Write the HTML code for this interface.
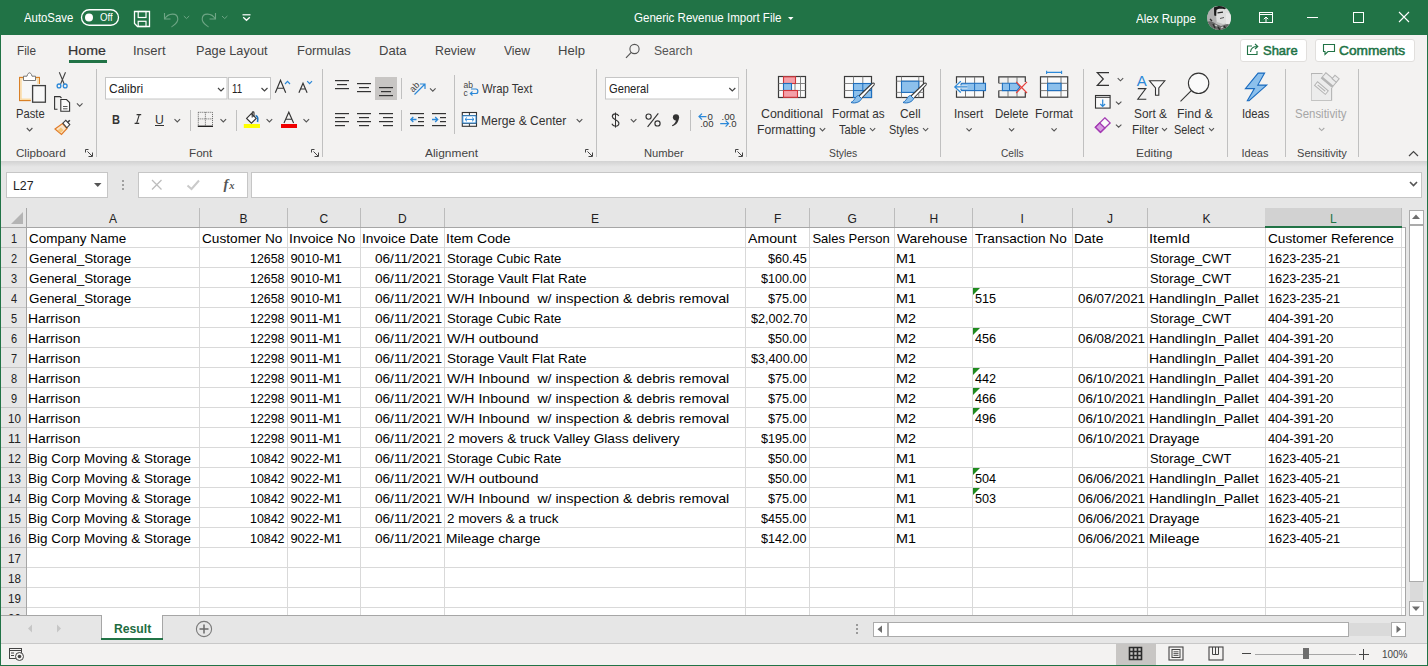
<!DOCTYPE html>
<html><head><meta charset="utf-8"><style>
html,body{margin:0;padding:0;width:1428px;height:666px;overflow:hidden;background:#fff;font-family:"Liberation Sans",sans-serif}
body>div,body>svg{position:absolute}

</style></head><body>
<div style="left:0px;top:0px;width:1428px;height:35px;background:#217346;"></div>
<div style="left:0px;top:35px;width:1428px;height:126px;background:#f3f2f1;"></div>
<div style="left:0px;top:161px;width:1428px;height:455px;background:#e6e6e6;"></div>
<div style="left:0;top:161px;width:1428px;height:6px;background:linear-gradient(#d2d2d2,#e6e6e6)"></div>
<div style="left:0px;top:616px;width:1428px;height:27px;background:#e6e6e6;"></div>
<div style="left:0px;top:643px;width:1428px;height:1px;background:#c8c8c8;"></div>
<div style="left:0px;top:644px;width:1428px;height:21px;background:#f3f2f1;"></div>
<div style="left:27px;top:228px;width:1378px;height:387px;background:#fff;"></div>
<div style="left:27px;top:247px;width:1378px;height:1px;background:#d9d9d9;"></div>
<div style="left:27px;top:267px;width:1378px;height:1px;background:#d9d9d9;"></div>
<div style="left:27px;top:287px;width:1378px;height:1px;background:#d9d9d9;"></div>
<div style="left:27px;top:307px;width:1378px;height:1px;background:#d9d9d9;"></div>
<div style="left:27px;top:327px;width:1378px;height:1px;background:#d9d9d9;"></div>
<div style="left:27px;top:347px;width:1378px;height:1px;background:#d9d9d9;"></div>
<div style="left:27px;top:367px;width:1378px;height:1px;background:#d9d9d9;"></div>
<div style="left:27px;top:387px;width:1378px;height:1px;background:#d9d9d9;"></div>
<div style="left:27px;top:407px;width:1378px;height:1px;background:#d9d9d9;"></div>
<div style="left:27px;top:427px;width:1378px;height:1px;background:#d9d9d9;"></div>
<div style="left:27px;top:447px;width:1378px;height:1px;background:#d9d9d9;"></div>
<div style="left:27px;top:467px;width:1378px;height:1px;background:#d9d9d9;"></div>
<div style="left:27px;top:487px;width:1378px;height:1px;background:#d9d9d9;"></div>
<div style="left:27px;top:507px;width:1378px;height:1px;background:#d9d9d9;"></div>
<div style="left:27px;top:527px;width:1378px;height:1px;background:#d9d9d9;"></div>
<div style="left:27px;top:547px;width:1378px;height:1px;background:#d9d9d9;"></div>
<div style="left:27px;top:567px;width:1378px;height:1px;background:#d9d9d9;"></div>
<div style="left:27px;top:587px;width:1378px;height:1px;background:#d9d9d9;"></div>
<div style="left:27px;top:607px;width:1378px;height:1px;background:#d9d9d9;"></div>
<div style="left:199px;top:228px;width:1px;height:387px;background:#d9d9d9;"></div>
<div style="left:287px;top:228px;width:1px;height:387px;background:#d9d9d9;"></div>
<div style="left:360px;top:228px;width:1px;height:387px;background:#d9d9d9;"></div>
<div style="left:444px;top:228px;width:1px;height:387px;background:#d9d9d9;"></div>
<div style="left:745px;top:228px;width:1px;height:387px;background:#d9d9d9;"></div>
<div style="left:809px;top:228px;width:1px;height:387px;background:#d9d9d9;"></div>
<div style="left:894px;top:228px;width:1px;height:387px;background:#d9d9d9;"></div>
<div style="left:972px;top:228px;width:1px;height:387px;background:#d9d9d9;"></div>
<div style="left:1072px;top:228px;width:1px;height:387px;background:#d9d9d9;"></div>
<div style="left:1147px;top:228px;width:1px;height:387px;background:#d9d9d9;"></div>
<div style="left:1265px;top:228px;width:1px;height:387px;background:#d9d9d9;"></div>
<div style="left:1401px;top:228px;width:1px;height:387px;background:#d9d9d9;"></div>
<div style="left:199px;top:208px;width:1px;height:19px;background:#bcbcbc;"></div>
<div style="left:287px;top:208px;width:1px;height:19px;background:#bcbcbc;"></div>
<div style="left:360px;top:208px;width:1px;height:19px;background:#bcbcbc;"></div>
<div style="left:444px;top:208px;width:1px;height:19px;background:#bcbcbc;"></div>
<div style="left:745px;top:208px;width:1px;height:19px;background:#bcbcbc;"></div>
<div style="left:809px;top:208px;width:1px;height:19px;background:#bcbcbc;"></div>
<div style="left:894px;top:208px;width:1px;height:19px;background:#bcbcbc;"></div>
<div style="left:972px;top:208px;width:1px;height:19px;background:#bcbcbc;"></div>
<div style="left:1072px;top:208px;width:1px;height:19px;background:#bcbcbc;"></div>
<div style="left:1147px;top:208px;width:1px;height:19px;background:#bcbcbc;"></div>
<div style="left:1265px;top:208px;width:1px;height:19px;background:#bcbcbc;"></div>
<div style="left:1265px;top:208px;width:136px;height:18px;background:#d2d2d2;"></div>
<div style="left:1265px;top:226px;width:137px;height:2px;background:#217346;"></div>
<div style="left:1401px;top:208px;width:1px;height:18px;background:#bcbcbc;"></div>
<div style="left:0px;top:227px;width:1265px;height:1px;background:#a6a6a6;"></div>
<div style="left:1402px;top:227px;width:4px;height:1px;background:#a6a6a6;"></div>
<div style="left:26px;top:208px;width:1px;height:407px;background:#a6a6a6;"></div>
<div style="left:1px;top:247px;width:25px;height:1px;background:#c6c6c6;"></div>
<div style="left:1px;top:267px;width:25px;height:1px;background:#c6c6c6;"></div>
<div style="left:1px;top:287px;width:25px;height:1px;background:#c6c6c6;"></div>
<div style="left:1px;top:307px;width:25px;height:1px;background:#c6c6c6;"></div>
<div style="left:1px;top:327px;width:25px;height:1px;background:#c6c6c6;"></div>
<div style="left:1px;top:347px;width:25px;height:1px;background:#c6c6c6;"></div>
<div style="left:1px;top:367px;width:25px;height:1px;background:#c6c6c6;"></div>
<div style="left:1px;top:387px;width:25px;height:1px;background:#c6c6c6;"></div>
<div style="left:1px;top:407px;width:25px;height:1px;background:#c6c6c6;"></div>
<div style="left:1px;top:427px;width:25px;height:1px;background:#c6c6c6;"></div>
<div style="left:1px;top:447px;width:25px;height:1px;background:#c6c6c6;"></div>
<div style="left:1px;top:467px;width:25px;height:1px;background:#c6c6c6;"></div>
<div style="left:1px;top:487px;width:25px;height:1px;background:#c6c6c6;"></div>
<div style="left:1px;top:507px;width:25px;height:1px;background:#c6c6c6;"></div>
<div style="left:1px;top:527px;width:25px;height:1px;background:#c6c6c6;"></div>
<div style="left:1px;top:547px;width:25px;height:1px;background:#c6c6c6;"></div>
<div style="left:1px;top:567px;width:25px;height:1px;background:#c6c6c6;"></div>
<div style="left:1px;top:587px;width:25px;height:1px;background:#c6c6c6;"></div>
<div style="left:1px;top:607px;width:25px;height:1px;background:#c6c6c6;"></div>
<svg style="left:11px;top:212px" width="13" height="13"><polygon points="12,0 12,12 0,12" fill="#b4b4b4"/></svg>
<div style="left:1405px;top:227px;width:1px;height:389px;background:#a6a6a6;"></div>
<div style="left:0px;top:615px;width:1406px;height:1px;background:#a6a6a6;"></div>
<div style="left:109.00px;top:213.00px;font-family:'Liberation Sans',sans-serif;font-size:12px;line-height:12px;font-weight:400;color:#222;white-space:pre;">A</div>
<div style="left:239.50px;top:213.00px;font-family:'Liberation Sans',sans-serif;font-size:12px;line-height:12px;font-weight:400;color:#222;white-space:pre;">B</div>
<div style="left:319.50px;top:213.00px;font-family:'Liberation Sans',sans-serif;font-size:12px;line-height:12px;font-weight:400;color:#222;white-space:pre;">C</div>
<div style="left:398.00px;top:213.00px;font-family:'Liberation Sans',sans-serif;font-size:12px;line-height:12px;font-weight:400;color:#222;white-space:pre;">D</div>
<div style="left:591.00px;top:213.00px;font-family:'Liberation Sans',sans-serif;font-size:12px;line-height:12px;font-weight:400;color:#222;white-space:pre;">E</div>
<div style="left:774.00px;top:213.00px;font-family:'Liberation Sans',sans-serif;font-size:12px;line-height:12px;font-weight:400;color:#222;white-space:pre;">F</div>
<div style="left:847.50px;top:213.00px;font-family:'Liberation Sans',sans-serif;font-size:12px;line-height:12px;font-weight:400;color:#222;white-space:pre;">G</div>
<div style="left:929.50px;top:213.00px;font-family:'Liberation Sans',sans-serif;font-size:12px;line-height:12px;font-weight:400;color:#222;white-space:pre;">H</div>
<div style="left:1020.50px;top:213.00px;font-family:'Liberation Sans',sans-serif;font-size:12px;line-height:12px;font-weight:400;color:#222;white-space:pre;">I</div>
<div style="left:1107.00px;top:213.00px;font-family:'Liberation Sans',sans-serif;font-size:12px;line-height:12px;font-weight:400;color:#222;white-space:pre;">J</div>
<div style="left:1202.50px;top:213.00px;font-family:'Liberation Sans',sans-serif;font-size:12px;line-height:12px;font-weight:400;color:#222;white-space:pre;">K</div>
<div style="left:1330.00px;top:213.00px;font-family:'Liberation Sans',sans-serif;font-size:12px;line-height:12px;font-weight:400;color:#217346;white-space:pre;">L</div>
<div style="left:0;top:228px;width:26px;height:387px;overflow:hidden">
<div style="left:10.50px;top:5.00px;font-family:'Liberation Sans',sans-serif;font-size:12px;line-height:12px;font-weight:400;color:#222;white-space:pre;transform:scaleX(0.9143);transform-origin:0 0;position:absolute">1</div>
<div style="left:10.50px;top:25.00px;font-family:'Liberation Sans',sans-serif;font-size:12px;line-height:12px;font-weight:400;color:#222;white-space:pre;transform:scaleX(0.9143);transform-origin:0 0;position:absolute">2</div>
<div style="left:10.50px;top:45.00px;font-family:'Liberation Sans',sans-serif;font-size:12px;line-height:12px;font-weight:400;color:#222;white-space:pre;transform:scaleX(0.9143);transform-origin:0 0;position:absolute">3</div>
<div style="left:10.50px;top:65.00px;font-family:'Liberation Sans',sans-serif;font-size:12px;line-height:12px;font-weight:400;color:#222;white-space:pre;transform:scaleX(0.9143);transform-origin:0 0;position:absolute">4</div>
<div style="left:10.50px;top:85.00px;font-family:'Liberation Sans',sans-serif;font-size:12px;line-height:12px;font-weight:400;color:#222;white-space:pre;transform:scaleX(0.9143);transform-origin:0 0;position:absolute">5</div>
<div style="left:10.50px;top:105.00px;font-family:'Liberation Sans',sans-serif;font-size:12px;line-height:12px;font-weight:400;color:#222;white-space:pre;transform:scaleX(0.9143);transform-origin:0 0;position:absolute">6</div>
<div style="left:10.50px;top:125.00px;font-family:'Liberation Sans',sans-serif;font-size:12px;line-height:12px;font-weight:400;color:#222;white-space:pre;transform:scaleX(0.9143);transform-origin:0 0;position:absolute">7</div>
<div style="left:10.50px;top:145.00px;font-family:'Liberation Sans',sans-serif;font-size:12px;line-height:12px;font-weight:400;color:#222;white-space:pre;transform:scaleX(0.9143);transform-origin:0 0;position:absolute">8</div>
<div style="left:10.50px;top:165.00px;font-family:'Liberation Sans',sans-serif;font-size:12px;line-height:12px;font-weight:400;color:#222;white-space:pre;transform:scaleX(0.9143);transform-origin:0 0;position:absolute">9</div>
<div style="left:7.70px;top:185.00px;font-family:'Liberation Sans',sans-serif;font-size:12px;line-height:12px;font-weight:400;color:#222;white-space:pre;transform:scaleX(0.9653);transform-origin:0 0;position:absolute">10</div>
<div style="left:7.70px;top:205.00px;font-family:'Liberation Sans',sans-serif;font-size:12px;line-height:12px;font-weight:400;color:#222;white-space:pre;transform:scaleX(1.0326);transform-origin:0 0;position:absolute">11</div>
<div style="left:7.70px;top:225.00px;font-family:'Liberation Sans',sans-serif;font-size:12px;line-height:12px;font-weight:400;color:#222;white-space:pre;transform:scaleX(0.9653);transform-origin:0 0;position:absolute">12</div>
<div style="left:7.70px;top:245.00px;font-family:'Liberation Sans',sans-serif;font-size:12px;line-height:12px;font-weight:400;color:#222;white-space:pre;transform:scaleX(0.9653);transform-origin:0 0;position:absolute">13</div>
<div style="left:7.70px;top:265.00px;font-family:'Liberation Sans',sans-serif;font-size:12px;line-height:12px;font-weight:400;color:#222;white-space:pre;transform:scaleX(0.9653);transform-origin:0 0;position:absolute">14</div>
<div style="left:7.70px;top:285.00px;font-family:'Liberation Sans',sans-serif;font-size:12px;line-height:12px;font-weight:400;color:#222;white-space:pre;transform:scaleX(0.9653);transform-origin:0 0;position:absolute">15</div>
<div style="left:7.70px;top:305.00px;font-family:'Liberation Sans',sans-serif;font-size:12px;line-height:12px;font-weight:400;color:#222;white-space:pre;transform:scaleX(0.9653);transform-origin:0 0;position:absolute">16</div>
<div style="left:7.70px;top:325.00px;font-family:'Liberation Sans',sans-serif;font-size:12px;line-height:12px;font-weight:400;color:#222;white-space:pre;transform:scaleX(0.9653);transform-origin:0 0;position:absolute">17</div>
<div style="left:7.70px;top:345.00px;font-family:'Liberation Sans',sans-serif;font-size:12px;line-height:12px;font-weight:400;color:#222;white-space:pre;transform:scaleX(0.9653);transform-origin:0 0;position:absolute">18</div>
<div style="left:7.70px;top:365.00px;font-family:'Liberation Sans',sans-serif;font-size:12px;line-height:12px;font-weight:400;color:#222;white-space:pre;transform:scaleX(0.9653);transform-origin:0 0;position:absolute">19</div>
<div style="left:7.70px;top:385.00px;font-family:'Liberation Sans',sans-serif;font-size:12px;line-height:12px;font-weight:400;color:#222;white-space:pre;transform:scaleX(0.9653);transform-origin:0 0;position:absolute">20</div>
</div>
<div style="left:29.40px;top:232.00px;font-family:'Liberation Sans',sans-serif;font-size:13px;line-height:13px;font-weight:400;color:#000;white-space:pre;transform:scaleX(1.0342);transform-origin:0 0;">Company Name</div>
<div style="left:202.40px;top:232.00px;font-family:'Liberation Sans',sans-serif;font-size:13px;line-height:13px;font-weight:400;color:#000;white-space:pre;transform:scaleX(1.0491);transform-origin:0 0;">Customer No</div>
<div style="left:289.32px;top:232.00px;font-family:'Liberation Sans',sans-serif;font-size:13px;line-height:13px;font-weight:400;color:#000;white-space:pre;transform:scaleX(1.0783);transform-origin:0 0;">Invoice No</div>
<div style="left:362.34px;top:232.00px;font-family:'Liberation Sans',sans-serif;font-size:13px;line-height:13px;font-weight:400;color:#000;white-space:pre;transform:scaleX(1.0587);transform-origin:0 0;">Invoice Date</div>
<div style="left:446.32px;top:232.00px;font-family:'Liberation Sans',sans-serif;font-size:13px;line-height:13px;font-weight:400;color:#000;white-space:pre;transform:scaleX(1.0759);transform-origin:0 0;">Item Code</div>
<div style="left:748.40px;top:232.00px;font-family:'Liberation Sans',sans-serif;font-size:13px;line-height:13px;font-weight:400;color:#000;white-space:pre;transform:scaleX(1.0843);transform-origin:0 0;">Amount</div>
<div style="left:812.40px;top:232.00px;font-family:'Liberation Sans',sans-serif;font-size:13px;line-height:13px;font-weight:400;color:#000;white-space:pre;">Sales Person</div>
<div style="left:897.40px;top:232.00px;font-family:'Liberation Sans',sans-serif;font-size:13px;line-height:13px;font-weight:400;color:#000;white-space:pre;transform:scaleX(1.0659);transform-origin:0 0;">Warehouse</div>
<div style="left:975.40px;top:232.00px;font-family:'Liberation Sans',sans-serif;font-size:13px;line-height:13px;font-weight:400;color:#000;white-space:pre;transform:scaleX(1.0465);transform-origin:0 0;">Transaction No</div>
<div style="left:1074.33px;top:232.00px;font-family:'Liberation Sans',sans-serif;font-size:13px;line-height:13px;font-weight:400;color:#000;white-space:pre;transform:scaleX(1.0713);transform-origin:0 0;">Date</div>
<div style="left:1149.26px;top:232.00px;font-family:'Liberation Sans',sans-serif;font-size:13px;line-height:13px;font-weight:400;color:#000;white-space:pre;transform:scaleX(1.1377);transform-origin:0 0;">ItemId</div>
<div style="left:1268.40px;top:232.00px;font-family:'Liberation Sans',sans-serif;font-size:13px;line-height:13px;font-weight:400;color:#000;white-space:pre;transform:scaleX(1.0500);transform-origin:0 0;">Customer Reference</div>
<div style="left:29.40px;top:252.00px;font-family:'Liberation Sans',sans-serif;font-size:13px;line-height:13px;font-weight:400;color:#000;white-space:pre;transform:scaleX(1.0316);transform-origin:0 0;">General_Storage</div>
<div style="left:250.20px;top:252.00px;font-family:'Liberation Sans',sans-serif;font-size:13px;line-height:13px;font-weight:400;color:#000;white-space:pre;transform:scaleX(0.9549);transform-origin:0 0;">12658</div>
<div style="left:290.40px;top:252.00px;font-family:'Liberation Sans',sans-serif;font-size:13px;line-height:13px;font-weight:400;color:#000;white-space:pre;">9010-M1</div>
<div style="left:374.70px;top:252.00px;font-family:'Liberation Sans',sans-serif;font-size:13px;line-height:13px;font-weight:400;color:#000;white-space:pre;transform:scaleX(1.0459);transform-origin:0 0;">06/11/2021</div>
<div style="left:447.40px;top:252.00px;font-family:'Liberation Sans',sans-serif;font-size:13px;line-height:13px;font-weight:400;color:#000;white-space:pre;transform:scaleX(1.0078);transform-origin:0 0;">Storage Cubic Rate</div>
<div style="left:768.00px;top:252.00px;font-family:'Liberation Sans',sans-serif;font-size:13px;line-height:13px;font-weight:400;color:#000;white-space:pre;transform:scaleX(0.9739);transform-origin:0 0;">$60.45</div>
<div style="left:896.29px;top:252.00px;font-family:'Liberation Sans',sans-serif;font-size:13px;line-height:13px;font-weight:400;color:#000;white-space:pre;transform:scaleX(1.1052);transform-origin:0 0;">M1</div>
<div style="left:1150.40px;top:252.00px;font-family:'Liberation Sans',sans-serif;font-size:13px;line-height:13px;font-weight:400;color:#000;white-space:pre;transform:scaleX(0.9864);transform-origin:0 0;">Storage_CWT</div>
<div style="left:1268.40px;top:252.00px;font-family:'Liberation Sans',sans-serif;font-size:13px;line-height:13px;font-weight:400;color:#000;white-space:pre;transform:scaleX(0.9769);transform-origin:0 0;">1623-235-21</div>
<div style="left:29.40px;top:272.00px;font-family:'Liberation Sans',sans-serif;font-size:13px;line-height:13px;font-weight:400;color:#000;white-space:pre;transform:scaleX(1.0316);transform-origin:0 0;">General_Storage</div>
<div style="left:250.20px;top:272.00px;font-family:'Liberation Sans',sans-serif;font-size:13px;line-height:13px;font-weight:400;color:#000;white-space:pre;transform:scaleX(0.9549);transform-origin:0 0;">12658</div>
<div style="left:290.40px;top:272.00px;font-family:'Liberation Sans',sans-serif;font-size:13px;line-height:13px;font-weight:400;color:#000;white-space:pre;">9010-M1</div>
<div style="left:374.70px;top:272.00px;font-family:'Liberation Sans',sans-serif;font-size:13px;line-height:13px;font-weight:400;color:#000;white-space:pre;transform:scaleX(1.0459);transform-origin:0 0;">06/11/2021</div>
<div style="left:447.40px;top:272.00px;font-family:'Liberation Sans',sans-serif;font-size:13px;line-height:13px;font-weight:400;color:#000;white-space:pre;transform:scaleX(1.0401);transform-origin:0 0;">Storage Vault Flat Rate</div>
<div style="left:761.30px;top:272.00px;font-family:'Liberation Sans',sans-serif;font-size:13px;line-height:13px;font-weight:400;color:#000;white-space:pre;transform:scaleX(0.9666);transform-origin:0 0;">$100.00</div>
<div style="left:896.29px;top:272.00px;font-family:'Liberation Sans',sans-serif;font-size:13px;line-height:13px;font-weight:400;color:#000;white-space:pre;transform:scaleX(1.1052);transform-origin:0 0;">M1</div>
<div style="left:1150.40px;top:272.00px;font-family:'Liberation Sans',sans-serif;font-size:13px;line-height:13px;font-weight:400;color:#000;white-space:pre;transform:scaleX(0.9864);transform-origin:0 0;">Storage_CWT</div>
<div style="left:1268.40px;top:272.00px;font-family:'Liberation Sans',sans-serif;font-size:13px;line-height:13px;font-weight:400;color:#000;white-space:pre;transform:scaleX(0.9769);transform-origin:0 0;">1623-235-21</div>
<div style="left:29.40px;top:292.00px;font-family:'Liberation Sans',sans-serif;font-size:13px;line-height:13px;font-weight:400;color:#000;white-space:pre;transform:scaleX(1.0316);transform-origin:0 0;">General_Storage</div>
<div style="left:250.20px;top:292.00px;font-family:'Liberation Sans',sans-serif;font-size:13px;line-height:13px;font-weight:400;color:#000;white-space:pre;transform:scaleX(0.9549);transform-origin:0 0;">12658</div>
<div style="left:290.40px;top:292.00px;font-family:'Liberation Sans',sans-serif;font-size:13px;line-height:13px;font-weight:400;color:#000;white-space:pre;">9010-M1</div>
<div style="left:374.70px;top:292.00px;font-family:'Liberation Sans',sans-serif;font-size:13px;line-height:13px;font-weight:400;color:#000;white-space:pre;transform:scaleX(1.0459);transform-origin:0 0;">06/11/2021</div>
<div style="left:447.40px;top:292.00px;font-family:'Liberation Sans',sans-serif;font-size:13px;line-height:13px;font-weight:400;color:#000;white-space:pre;transform:scaleX(1.0878);transform-origin:0 0;">W/H Inbound  w/ inspection &amp; debris removal</div>
<div style="left:768.00px;top:292.00px;font-family:'Liberation Sans',sans-serif;font-size:13px;line-height:13px;font-weight:400;color:#000;white-space:pre;transform:scaleX(0.9739);transform-origin:0 0;">$75.00</div>
<div style="left:896.29px;top:292.00px;font-family:'Liberation Sans',sans-serif;font-size:13px;line-height:13px;font-weight:400;color:#000;white-space:pre;transform:scaleX(1.1052);transform-origin:0 0;">M1</div>
<div style="left:975.40px;top:292.00px;font-family:'Liberation Sans',sans-serif;font-size:13px;line-height:13px;font-weight:400;color:#000;white-space:pre;transform:scaleX(0.9739);transform-origin:0 0;">515</div>
<svg style="left:973px;top:288px" width="8" height="8"><polygon points="0,0 7,0 0,7" fill="#1e8a1e"/></svg>
<div style="left:1077.70px;top:292.00px;font-family:'Liberation Sans',sans-serif;font-size:13px;line-height:13px;font-weight:400;color:#000;white-space:pre;transform:scaleX(1.0303);transform-origin:0 0;">06/07/2021</div>
<div style="left:1149.32px;top:292.00px;font-family:'Liberation Sans',sans-serif;font-size:13px;line-height:13px;font-weight:400;color:#000;white-space:pre;transform:scaleX(1.0771);transform-origin:0 0;">HandlingIn_Pallet</div>
<div style="left:1268.40px;top:292.00px;font-family:'Liberation Sans',sans-serif;font-size:13px;line-height:13px;font-weight:400;color:#000;white-space:pre;transform:scaleX(0.9769);transform-origin:0 0;">1623-235-21</div>
<div style="left:28.33px;top:312.00px;font-family:'Liberation Sans',sans-serif;font-size:13px;line-height:13px;font-weight:400;color:#000;white-space:pre;transform:scaleX(1.0669);transform-origin:0 0;">Harrison</div>
<div style="left:250.20px;top:312.00px;font-family:'Liberation Sans',sans-serif;font-size:13px;line-height:13px;font-weight:400;color:#000;white-space:pre;transform:scaleX(0.9549);transform-origin:0 0;">12298</div>
<div style="left:290.40px;top:312.00px;font-family:'Liberation Sans',sans-serif;font-size:13px;line-height:13px;font-weight:400;color:#000;white-space:pre;transform:scaleX(1.0177);transform-origin:0 0;">9011-M1</div>
<div style="left:374.70px;top:312.00px;font-family:'Liberation Sans',sans-serif;font-size:13px;line-height:13px;font-weight:400;color:#000;white-space:pre;transform:scaleX(1.0459);transform-origin:0 0;">06/11/2021</div>
<div style="left:447.40px;top:312.00px;font-family:'Liberation Sans',sans-serif;font-size:13px;line-height:13px;font-weight:400;color:#000;white-space:pre;transform:scaleX(1.0078);transform-origin:0 0;">Storage Cubic Rate</div>
<div style="left:750.50px;top:312.00px;font-family:'Liberation Sans',sans-serif;font-size:13px;line-height:13px;font-weight:400;color:#000;white-space:pre;transform:scaleX(0.9722);transform-origin:0 0;">$2,002.70</div>
<div style="left:896.29px;top:312.00px;font-family:'Liberation Sans',sans-serif;font-size:13px;line-height:13px;font-weight:400;color:#000;white-space:pre;transform:scaleX(1.1052);transform-origin:0 0;">M2</div>
<div style="left:1150.40px;top:312.00px;font-family:'Liberation Sans',sans-serif;font-size:13px;line-height:13px;font-weight:400;color:#000;white-space:pre;transform:scaleX(0.9864);transform-origin:0 0;">Storage_CWT</div>
<div style="left:1268.40px;top:312.00px;font-family:'Liberation Sans',sans-serif;font-size:13px;line-height:13px;font-weight:400;color:#000;white-space:pre;transform:scaleX(0.9839);transform-origin:0 0;">404-391-20</div>
<div style="left:28.33px;top:332.00px;font-family:'Liberation Sans',sans-serif;font-size:13px;line-height:13px;font-weight:400;color:#000;white-space:pre;transform:scaleX(1.0669);transform-origin:0 0;">Harrison</div>
<div style="left:250.20px;top:332.00px;font-family:'Liberation Sans',sans-serif;font-size:13px;line-height:13px;font-weight:400;color:#000;white-space:pre;transform:scaleX(0.9549);transform-origin:0 0;">12298</div>
<div style="left:290.40px;top:332.00px;font-family:'Liberation Sans',sans-serif;font-size:13px;line-height:13px;font-weight:400;color:#000;white-space:pre;transform:scaleX(1.0177);transform-origin:0 0;">9011-M1</div>
<div style="left:374.70px;top:332.00px;font-family:'Liberation Sans',sans-serif;font-size:13px;line-height:13px;font-weight:400;color:#000;white-space:pre;transform:scaleX(1.0459);transform-origin:0 0;">06/11/2021</div>
<div style="left:447.40px;top:332.00px;font-family:'Liberation Sans',sans-serif;font-size:13px;line-height:13px;font-weight:400;color:#000;white-space:pre;transform:scaleX(1.1017);transform-origin:0 0;">W/H outbound</div>
<div style="left:768.00px;top:332.00px;font-family:'Liberation Sans',sans-serif;font-size:13px;line-height:13px;font-weight:400;color:#000;white-space:pre;transform:scaleX(0.9739);transform-origin:0 0;">$50.00</div>
<div style="left:896.29px;top:332.00px;font-family:'Liberation Sans',sans-serif;font-size:13px;line-height:13px;font-weight:400;color:#000;white-space:pre;transform:scaleX(1.1052);transform-origin:0 0;">M2</div>
<div style="left:975.40px;top:332.00px;font-family:'Liberation Sans',sans-serif;font-size:13px;line-height:13px;font-weight:400;color:#000;white-space:pre;transform:scaleX(0.9739);transform-origin:0 0;">456</div>
<svg style="left:973px;top:328px" width="8" height="8"><polygon points="0,0 7,0 0,7" fill="#1e8a1e"/></svg>
<div style="left:1077.70px;top:332.00px;font-family:'Liberation Sans',sans-serif;font-size:13px;line-height:13px;font-weight:400;color:#000;white-space:pre;transform:scaleX(1.0303);transform-origin:0 0;">06/08/2021</div>
<div style="left:1149.32px;top:332.00px;font-family:'Liberation Sans',sans-serif;font-size:13px;line-height:13px;font-weight:400;color:#000;white-space:pre;transform:scaleX(1.0771);transform-origin:0 0;">HandlingIn_Pallet</div>
<div style="left:1268.40px;top:332.00px;font-family:'Liberation Sans',sans-serif;font-size:13px;line-height:13px;font-weight:400;color:#000;white-space:pre;transform:scaleX(0.9839);transform-origin:0 0;">404-391-20</div>
<div style="left:28.33px;top:352.00px;font-family:'Liberation Sans',sans-serif;font-size:13px;line-height:13px;font-weight:400;color:#000;white-space:pre;transform:scaleX(1.0669);transform-origin:0 0;">Harrison</div>
<div style="left:250.20px;top:352.00px;font-family:'Liberation Sans',sans-serif;font-size:13px;line-height:13px;font-weight:400;color:#000;white-space:pre;transform:scaleX(0.9549);transform-origin:0 0;">12298</div>
<div style="left:290.40px;top:352.00px;font-family:'Liberation Sans',sans-serif;font-size:13px;line-height:13px;font-weight:400;color:#000;white-space:pre;transform:scaleX(1.0177);transform-origin:0 0;">9011-M1</div>
<div style="left:374.70px;top:352.00px;font-family:'Liberation Sans',sans-serif;font-size:13px;line-height:13px;font-weight:400;color:#000;white-space:pre;transform:scaleX(1.0459);transform-origin:0 0;">06/11/2021</div>
<div style="left:447.40px;top:352.00px;font-family:'Liberation Sans',sans-serif;font-size:13px;line-height:13px;font-weight:400;color:#000;white-space:pre;transform:scaleX(1.0401);transform-origin:0 0;">Storage Vault Flat Rate</div>
<div style="left:750.50px;top:352.00px;font-family:'Liberation Sans',sans-serif;font-size:13px;line-height:13px;font-weight:400;color:#000;white-space:pre;transform:scaleX(0.9722);transform-origin:0 0;">$3,400.00</div>
<div style="left:896.29px;top:352.00px;font-family:'Liberation Sans',sans-serif;font-size:13px;line-height:13px;font-weight:400;color:#000;white-space:pre;transform:scaleX(1.1052);transform-origin:0 0;">M2</div>
<div style="left:1149.32px;top:352.00px;font-family:'Liberation Sans',sans-serif;font-size:13px;line-height:13px;font-weight:400;color:#000;white-space:pre;transform:scaleX(1.0771);transform-origin:0 0;">HandlingIn_Pallet</div>
<div style="left:1268.40px;top:352.00px;font-family:'Liberation Sans',sans-serif;font-size:13px;line-height:13px;font-weight:400;color:#000;white-space:pre;transform:scaleX(0.9839);transform-origin:0 0;">404-391-20</div>
<div style="left:28.33px;top:372.00px;font-family:'Liberation Sans',sans-serif;font-size:13px;line-height:13px;font-weight:400;color:#000;white-space:pre;transform:scaleX(1.0669);transform-origin:0 0;">Harrison</div>
<div style="left:250.20px;top:372.00px;font-family:'Liberation Sans',sans-serif;font-size:13px;line-height:13px;font-weight:400;color:#000;white-space:pre;transform:scaleX(0.9549);transform-origin:0 0;">12298</div>
<div style="left:290.40px;top:372.00px;font-family:'Liberation Sans',sans-serif;font-size:13px;line-height:13px;font-weight:400;color:#000;white-space:pre;transform:scaleX(1.0177);transform-origin:0 0;">9011-M1</div>
<div style="left:374.70px;top:372.00px;font-family:'Liberation Sans',sans-serif;font-size:13px;line-height:13px;font-weight:400;color:#000;white-space:pre;transform:scaleX(1.0459);transform-origin:0 0;">06/11/2021</div>
<div style="left:447.40px;top:372.00px;font-family:'Liberation Sans',sans-serif;font-size:13px;line-height:13px;font-weight:400;color:#000;white-space:pre;transform:scaleX(1.0878);transform-origin:0 0;">W/H Inbound  w/ inspection &amp; debris removal</div>
<div style="left:768.00px;top:372.00px;font-family:'Liberation Sans',sans-serif;font-size:13px;line-height:13px;font-weight:400;color:#000;white-space:pre;transform:scaleX(0.9739);transform-origin:0 0;">$75.00</div>
<div style="left:896.29px;top:372.00px;font-family:'Liberation Sans',sans-serif;font-size:13px;line-height:13px;font-weight:400;color:#000;white-space:pre;transform:scaleX(1.1052);transform-origin:0 0;">M2</div>
<div style="left:975.40px;top:372.00px;font-family:'Liberation Sans',sans-serif;font-size:13px;line-height:13px;font-weight:400;color:#000;white-space:pre;transform:scaleX(0.9739);transform-origin:0 0;">442</div>
<svg style="left:973px;top:368px" width="8" height="8"><polygon points="0,0 7,0 0,7" fill="#1e8a1e"/></svg>
<div style="left:1077.70px;top:372.00px;font-family:'Liberation Sans',sans-serif;font-size:13px;line-height:13px;font-weight:400;color:#000;white-space:pre;transform:scaleX(1.0303);transform-origin:0 0;">06/10/2021</div>
<div style="left:1149.32px;top:372.00px;font-family:'Liberation Sans',sans-serif;font-size:13px;line-height:13px;font-weight:400;color:#000;white-space:pre;transform:scaleX(1.0771);transform-origin:0 0;">HandlingIn_Pallet</div>
<div style="left:1268.40px;top:372.00px;font-family:'Liberation Sans',sans-serif;font-size:13px;line-height:13px;font-weight:400;color:#000;white-space:pre;transform:scaleX(0.9839);transform-origin:0 0;">404-391-20</div>
<div style="left:28.33px;top:392.00px;font-family:'Liberation Sans',sans-serif;font-size:13px;line-height:13px;font-weight:400;color:#000;white-space:pre;transform:scaleX(1.0669);transform-origin:0 0;">Harrison</div>
<div style="left:250.20px;top:392.00px;font-family:'Liberation Sans',sans-serif;font-size:13px;line-height:13px;font-weight:400;color:#000;white-space:pre;transform:scaleX(0.9549);transform-origin:0 0;">12298</div>
<div style="left:290.40px;top:392.00px;font-family:'Liberation Sans',sans-serif;font-size:13px;line-height:13px;font-weight:400;color:#000;white-space:pre;transform:scaleX(1.0177);transform-origin:0 0;">9011-M1</div>
<div style="left:374.70px;top:392.00px;font-family:'Liberation Sans',sans-serif;font-size:13px;line-height:13px;font-weight:400;color:#000;white-space:pre;transform:scaleX(1.0459);transform-origin:0 0;">06/11/2021</div>
<div style="left:447.40px;top:392.00px;font-family:'Liberation Sans',sans-serif;font-size:13px;line-height:13px;font-weight:400;color:#000;white-space:pre;transform:scaleX(1.0878);transform-origin:0 0;">W/H Inbound  w/ inspection &amp; debris removal</div>
<div style="left:768.00px;top:392.00px;font-family:'Liberation Sans',sans-serif;font-size:13px;line-height:13px;font-weight:400;color:#000;white-space:pre;transform:scaleX(0.9739);transform-origin:0 0;">$75.00</div>
<div style="left:896.29px;top:392.00px;font-family:'Liberation Sans',sans-serif;font-size:13px;line-height:13px;font-weight:400;color:#000;white-space:pre;transform:scaleX(1.1052);transform-origin:0 0;">M2</div>
<div style="left:975.40px;top:392.00px;font-family:'Liberation Sans',sans-serif;font-size:13px;line-height:13px;font-weight:400;color:#000;white-space:pre;transform:scaleX(0.9739);transform-origin:0 0;">466</div>
<svg style="left:973px;top:388px" width="8" height="8"><polygon points="0,0 7,0 0,7" fill="#1e8a1e"/></svg>
<div style="left:1077.70px;top:392.00px;font-family:'Liberation Sans',sans-serif;font-size:13px;line-height:13px;font-weight:400;color:#000;white-space:pre;transform:scaleX(1.0303);transform-origin:0 0;">06/10/2021</div>
<div style="left:1149.32px;top:392.00px;font-family:'Liberation Sans',sans-serif;font-size:13px;line-height:13px;font-weight:400;color:#000;white-space:pre;transform:scaleX(1.0771);transform-origin:0 0;">HandlingIn_Pallet</div>
<div style="left:1268.40px;top:392.00px;font-family:'Liberation Sans',sans-serif;font-size:13px;line-height:13px;font-weight:400;color:#000;white-space:pre;transform:scaleX(0.9839);transform-origin:0 0;">404-391-20</div>
<div style="left:28.33px;top:412.00px;font-family:'Liberation Sans',sans-serif;font-size:13px;line-height:13px;font-weight:400;color:#000;white-space:pre;transform:scaleX(1.0669);transform-origin:0 0;">Harrison</div>
<div style="left:250.20px;top:412.00px;font-family:'Liberation Sans',sans-serif;font-size:13px;line-height:13px;font-weight:400;color:#000;white-space:pre;transform:scaleX(0.9549);transform-origin:0 0;">12298</div>
<div style="left:290.40px;top:412.00px;font-family:'Liberation Sans',sans-serif;font-size:13px;line-height:13px;font-weight:400;color:#000;white-space:pre;transform:scaleX(1.0177);transform-origin:0 0;">9011-M1</div>
<div style="left:374.70px;top:412.00px;font-family:'Liberation Sans',sans-serif;font-size:13px;line-height:13px;font-weight:400;color:#000;white-space:pre;transform:scaleX(1.0459);transform-origin:0 0;">06/11/2021</div>
<div style="left:447.40px;top:412.00px;font-family:'Liberation Sans',sans-serif;font-size:13px;line-height:13px;font-weight:400;color:#000;white-space:pre;transform:scaleX(1.0878);transform-origin:0 0;">W/H Inbound  w/ inspection &amp; debris removal</div>
<div style="left:768.00px;top:412.00px;font-family:'Liberation Sans',sans-serif;font-size:13px;line-height:13px;font-weight:400;color:#000;white-space:pre;transform:scaleX(0.9739);transform-origin:0 0;">$75.00</div>
<div style="left:896.29px;top:412.00px;font-family:'Liberation Sans',sans-serif;font-size:13px;line-height:13px;font-weight:400;color:#000;white-space:pre;transform:scaleX(1.1052);transform-origin:0 0;">M2</div>
<div style="left:975.40px;top:412.00px;font-family:'Liberation Sans',sans-serif;font-size:13px;line-height:13px;font-weight:400;color:#000;white-space:pre;transform:scaleX(0.9739);transform-origin:0 0;">496</div>
<svg style="left:973px;top:408px" width="8" height="8"><polygon points="0,0 7,0 0,7" fill="#1e8a1e"/></svg>
<div style="left:1077.70px;top:412.00px;font-family:'Liberation Sans',sans-serif;font-size:13px;line-height:13px;font-weight:400;color:#000;white-space:pre;transform:scaleX(1.0303);transform-origin:0 0;">06/10/2021</div>
<div style="left:1149.32px;top:412.00px;font-family:'Liberation Sans',sans-serif;font-size:13px;line-height:13px;font-weight:400;color:#000;white-space:pre;transform:scaleX(1.0771);transform-origin:0 0;">HandlingIn_Pallet</div>
<div style="left:1268.40px;top:412.00px;font-family:'Liberation Sans',sans-serif;font-size:13px;line-height:13px;font-weight:400;color:#000;white-space:pre;transform:scaleX(0.9839);transform-origin:0 0;">404-391-20</div>
<div style="left:28.33px;top:432.00px;font-family:'Liberation Sans',sans-serif;font-size:13px;line-height:13px;font-weight:400;color:#000;white-space:pre;transform:scaleX(1.0669);transform-origin:0 0;">Harrison</div>
<div style="left:250.20px;top:432.00px;font-family:'Liberation Sans',sans-serif;font-size:13px;line-height:13px;font-weight:400;color:#000;white-space:pre;transform:scaleX(0.9549);transform-origin:0 0;">12298</div>
<div style="left:290.40px;top:432.00px;font-family:'Liberation Sans',sans-serif;font-size:13px;line-height:13px;font-weight:400;color:#000;white-space:pre;transform:scaleX(1.0177);transform-origin:0 0;">9011-M1</div>
<div style="left:374.70px;top:432.00px;font-family:'Liberation Sans',sans-serif;font-size:13px;line-height:13px;font-weight:400;color:#000;white-space:pre;transform:scaleX(1.0459);transform-origin:0 0;">06/11/2021</div>
<div style="left:447.40px;top:432.00px;font-family:'Liberation Sans',sans-serif;font-size:13px;line-height:13px;font-weight:400;color:#000;white-space:pre;transform:scaleX(1.0536);transform-origin:0 0;">2 movers &amp; truck Valley Glass delivery</div>
<div style="left:761.30px;top:432.00px;font-family:'Liberation Sans',sans-serif;font-size:13px;line-height:13px;font-weight:400;color:#000;white-space:pre;transform:scaleX(0.9666);transform-origin:0 0;">$195.00</div>
<div style="left:896.29px;top:432.00px;font-family:'Liberation Sans',sans-serif;font-size:13px;line-height:13px;font-weight:400;color:#000;white-space:pre;transform:scaleX(1.1052);transform-origin:0 0;">M2</div>
<div style="left:1077.70px;top:432.00px;font-family:'Liberation Sans',sans-serif;font-size:13px;line-height:13px;font-weight:400;color:#000;white-space:pre;transform:scaleX(1.0303);transform-origin:0 0;">06/10/2021</div>
<div style="left:1149.37px;top:432.00px;font-family:'Liberation Sans',sans-serif;font-size:13px;line-height:13px;font-weight:400;color:#000;white-space:pre;transform:scaleX(1.0270);transform-origin:0 0;">Drayage</div>
<div style="left:1268.40px;top:432.00px;font-family:'Liberation Sans',sans-serif;font-size:13px;line-height:13px;font-weight:400;color:#000;white-space:pre;transform:scaleX(0.9839);transform-origin:0 0;">404-391-20</div>
<div style="left:28.36px;top:452.00px;font-family:'Liberation Sans',sans-serif;font-size:13px;line-height:13px;font-weight:400;color:#000;white-space:pre;transform:scaleX(1.0352);transform-origin:0 0;">Big Corp Moving &amp; Storage</div>
<div style="left:250.20px;top:452.00px;font-family:'Liberation Sans',sans-serif;font-size:13px;line-height:13px;font-weight:400;color:#000;white-space:pre;transform:scaleX(0.9549);transform-origin:0 0;">10842</div>
<div style="left:290.40px;top:452.00px;font-family:'Liberation Sans',sans-serif;font-size:13px;line-height:13px;font-weight:400;color:#000;white-space:pre;">9022-M1</div>
<div style="left:374.70px;top:452.00px;font-family:'Liberation Sans',sans-serif;font-size:13px;line-height:13px;font-weight:400;color:#000;white-space:pre;transform:scaleX(1.0459);transform-origin:0 0;">06/11/2021</div>
<div style="left:447.40px;top:452.00px;font-family:'Liberation Sans',sans-serif;font-size:13px;line-height:13px;font-weight:400;color:#000;white-space:pre;transform:scaleX(1.0078);transform-origin:0 0;">Storage Cubic Rate</div>
<div style="left:768.00px;top:452.00px;font-family:'Liberation Sans',sans-serif;font-size:13px;line-height:13px;font-weight:400;color:#000;white-space:pre;transform:scaleX(0.9739);transform-origin:0 0;">$50.00</div>
<div style="left:896.29px;top:452.00px;font-family:'Liberation Sans',sans-serif;font-size:13px;line-height:13px;font-weight:400;color:#000;white-space:pre;transform:scaleX(1.1052);transform-origin:0 0;">M1</div>
<div style="left:1150.40px;top:452.00px;font-family:'Liberation Sans',sans-serif;font-size:13px;line-height:13px;font-weight:400;color:#000;white-space:pre;transform:scaleX(0.9864);transform-origin:0 0;">Storage_CWT</div>
<div style="left:1268.40px;top:452.00px;font-family:'Liberation Sans',sans-serif;font-size:13px;line-height:13px;font-weight:400;color:#000;white-space:pre;transform:scaleX(0.9769);transform-origin:0 0;">1623-405-21</div>
<div style="left:28.36px;top:472.00px;font-family:'Liberation Sans',sans-serif;font-size:13px;line-height:13px;font-weight:400;color:#000;white-space:pre;transform:scaleX(1.0352);transform-origin:0 0;">Big Corp Moving &amp; Storage</div>
<div style="left:250.20px;top:472.00px;font-family:'Liberation Sans',sans-serif;font-size:13px;line-height:13px;font-weight:400;color:#000;white-space:pre;transform:scaleX(0.9549);transform-origin:0 0;">10842</div>
<div style="left:290.40px;top:472.00px;font-family:'Liberation Sans',sans-serif;font-size:13px;line-height:13px;font-weight:400;color:#000;white-space:pre;">9022-M1</div>
<div style="left:374.70px;top:472.00px;font-family:'Liberation Sans',sans-serif;font-size:13px;line-height:13px;font-weight:400;color:#000;white-space:pre;transform:scaleX(1.0459);transform-origin:0 0;">06/11/2021</div>
<div style="left:447.40px;top:472.00px;font-family:'Liberation Sans',sans-serif;font-size:13px;line-height:13px;font-weight:400;color:#000;white-space:pre;transform:scaleX(1.1017);transform-origin:0 0;">W/H outbound</div>
<div style="left:768.00px;top:472.00px;font-family:'Liberation Sans',sans-serif;font-size:13px;line-height:13px;font-weight:400;color:#000;white-space:pre;transform:scaleX(0.9739);transform-origin:0 0;">$50.00</div>
<div style="left:896.29px;top:472.00px;font-family:'Liberation Sans',sans-serif;font-size:13px;line-height:13px;font-weight:400;color:#000;white-space:pre;transform:scaleX(1.1052);transform-origin:0 0;">M1</div>
<div style="left:975.40px;top:472.00px;font-family:'Liberation Sans',sans-serif;font-size:13px;line-height:13px;font-weight:400;color:#000;white-space:pre;transform:scaleX(0.9739);transform-origin:0 0;">504</div>
<svg style="left:973px;top:468px" width="8" height="8"><polygon points="0,0 7,0 0,7" fill="#1e8a1e"/></svg>
<div style="left:1077.70px;top:472.00px;font-family:'Liberation Sans',sans-serif;font-size:13px;line-height:13px;font-weight:400;color:#000;white-space:pre;transform:scaleX(1.0303);transform-origin:0 0;">06/06/2021</div>
<div style="left:1149.32px;top:472.00px;font-family:'Liberation Sans',sans-serif;font-size:13px;line-height:13px;font-weight:400;color:#000;white-space:pre;transform:scaleX(1.0771);transform-origin:0 0;">HandlingIn_Pallet</div>
<div style="left:1268.40px;top:472.00px;font-family:'Liberation Sans',sans-serif;font-size:13px;line-height:13px;font-weight:400;color:#000;white-space:pre;transform:scaleX(0.9769);transform-origin:0 0;">1623-405-21</div>
<div style="left:28.36px;top:492.00px;font-family:'Liberation Sans',sans-serif;font-size:13px;line-height:13px;font-weight:400;color:#000;white-space:pre;transform:scaleX(1.0352);transform-origin:0 0;">Big Corp Moving &amp; Storage</div>
<div style="left:250.20px;top:492.00px;font-family:'Liberation Sans',sans-serif;font-size:13px;line-height:13px;font-weight:400;color:#000;white-space:pre;transform:scaleX(0.9549);transform-origin:0 0;">10842</div>
<div style="left:290.40px;top:492.00px;font-family:'Liberation Sans',sans-serif;font-size:13px;line-height:13px;font-weight:400;color:#000;white-space:pre;">9022-M1</div>
<div style="left:374.70px;top:492.00px;font-family:'Liberation Sans',sans-serif;font-size:13px;line-height:13px;font-weight:400;color:#000;white-space:pre;transform:scaleX(1.0459);transform-origin:0 0;">06/11/2021</div>
<div style="left:447.40px;top:492.00px;font-family:'Liberation Sans',sans-serif;font-size:13px;line-height:13px;font-weight:400;color:#000;white-space:pre;transform:scaleX(1.0878);transform-origin:0 0;">W/H Inbound  w/ inspection &amp; debris removal</div>
<div style="left:768.00px;top:492.00px;font-family:'Liberation Sans',sans-serif;font-size:13px;line-height:13px;font-weight:400;color:#000;white-space:pre;transform:scaleX(0.9739);transform-origin:0 0;">$75.00</div>
<div style="left:896.29px;top:492.00px;font-family:'Liberation Sans',sans-serif;font-size:13px;line-height:13px;font-weight:400;color:#000;white-space:pre;transform:scaleX(1.1052);transform-origin:0 0;">M1</div>
<div style="left:975.40px;top:492.00px;font-family:'Liberation Sans',sans-serif;font-size:13px;line-height:13px;font-weight:400;color:#000;white-space:pre;transform:scaleX(0.9739);transform-origin:0 0;">503</div>
<svg style="left:973px;top:488px" width="8" height="8"><polygon points="0,0 7,0 0,7" fill="#1e8a1e"/></svg>
<div style="left:1077.70px;top:492.00px;font-family:'Liberation Sans',sans-serif;font-size:13px;line-height:13px;font-weight:400;color:#000;white-space:pre;transform:scaleX(1.0303);transform-origin:0 0;">06/06/2021</div>
<div style="left:1149.32px;top:492.00px;font-family:'Liberation Sans',sans-serif;font-size:13px;line-height:13px;font-weight:400;color:#000;white-space:pre;transform:scaleX(1.0771);transform-origin:0 0;">HandlingIn_Pallet</div>
<div style="left:1268.40px;top:492.00px;font-family:'Liberation Sans',sans-serif;font-size:13px;line-height:13px;font-weight:400;color:#000;white-space:pre;transform:scaleX(0.9769);transform-origin:0 0;">1623-405-21</div>
<div style="left:28.36px;top:512.00px;font-family:'Liberation Sans',sans-serif;font-size:13px;line-height:13px;font-weight:400;color:#000;white-space:pre;transform:scaleX(1.0352);transform-origin:0 0;">Big Corp Moving &amp; Storage</div>
<div style="left:250.20px;top:512.00px;font-family:'Liberation Sans',sans-serif;font-size:13px;line-height:13px;font-weight:400;color:#000;white-space:pre;transform:scaleX(0.9549);transform-origin:0 0;">10842</div>
<div style="left:290.40px;top:512.00px;font-family:'Liberation Sans',sans-serif;font-size:13px;line-height:13px;font-weight:400;color:#000;white-space:pre;">9022-M1</div>
<div style="left:374.70px;top:512.00px;font-family:'Liberation Sans',sans-serif;font-size:13px;line-height:13px;font-weight:400;color:#000;white-space:pre;transform:scaleX(1.0459);transform-origin:0 0;">06/11/2021</div>
<div style="left:447.40px;top:512.00px;font-family:'Liberation Sans',sans-serif;font-size:13px;line-height:13px;font-weight:400;color:#000;white-space:pre;transform:scaleX(1.0288);transform-origin:0 0;">2 movers &amp; a truck</div>
<div style="left:761.30px;top:512.00px;font-family:'Liberation Sans',sans-serif;font-size:13px;line-height:13px;font-weight:400;color:#000;white-space:pre;transform:scaleX(0.9666);transform-origin:0 0;">$455.00</div>
<div style="left:896.29px;top:512.00px;font-family:'Liberation Sans',sans-serif;font-size:13px;line-height:13px;font-weight:400;color:#000;white-space:pre;transform:scaleX(1.1052);transform-origin:0 0;">M1</div>
<div style="left:1077.70px;top:512.00px;font-family:'Liberation Sans',sans-serif;font-size:13px;line-height:13px;font-weight:400;color:#000;white-space:pre;transform:scaleX(1.0303);transform-origin:0 0;">06/06/2021</div>
<div style="left:1149.37px;top:512.00px;font-family:'Liberation Sans',sans-serif;font-size:13px;line-height:13px;font-weight:400;color:#000;white-space:pre;transform:scaleX(1.0270);transform-origin:0 0;">Drayage</div>
<div style="left:1268.40px;top:512.00px;font-family:'Liberation Sans',sans-serif;font-size:13px;line-height:13px;font-weight:400;color:#000;white-space:pre;transform:scaleX(0.9769);transform-origin:0 0;">1623-405-21</div>
<div style="left:28.36px;top:532.00px;font-family:'Liberation Sans',sans-serif;font-size:13px;line-height:13px;font-weight:400;color:#000;white-space:pre;transform:scaleX(1.0352);transform-origin:0 0;">Big Corp Moving &amp; Storage</div>
<div style="left:250.20px;top:532.00px;font-family:'Liberation Sans',sans-serif;font-size:13px;line-height:13px;font-weight:400;color:#000;white-space:pre;transform:scaleX(0.9549);transform-origin:0 0;">10842</div>
<div style="left:290.40px;top:532.00px;font-family:'Liberation Sans',sans-serif;font-size:13px;line-height:13px;font-weight:400;color:#000;white-space:pre;">9022-M1</div>
<div style="left:374.70px;top:532.00px;font-family:'Liberation Sans',sans-serif;font-size:13px;line-height:13px;font-weight:400;color:#000;white-space:pre;transform:scaleX(1.0459);transform-origin:0 0;">06/11/2021</div>
<div style="left:446.34px;top:532.00px;font-family:'Liberation Sans',sans-serif;font-size:13px;line-height:13px;font-weight:400;color:#000;white-space:pre;transform:scaleX(1.0610);transform-origin:0 0;">Mileage charge</div>
<div style="left:761.30px;top:532.00px;font-family:'Liberation Sans',sans-serif;font-size:13px;line-height:13px;font-weight:400;color:#000;white-space:pre;transform:scaleX(0.9666);transform-origin:0 0;">$142.00</div>
<div style="left:896.29px;top:532.00px;font-family:'Liberation Sans',sans-serif;font-size:13px;line-height:13px;font-weight:400;color:#000;white-space:pre;transform:scaleX(1.1052);transform-origin:0 0;">M1</div>
<div style="left:1077.70px;top:532.00px;font-family:'Liberation Sans',sans-serif;font-size:13px;line-height:13px;font-weight:400;color:#000;white-space:pre;transform:scaleX(1.0303);transform-origin:0 0;">06/06/2021</div>
<div style="left:1149.29px;top:532.00px;font-family:'Liberation Sans',sans-serif;font-size:13px;line-height:13px;font-weight:400;color:#000;white-space:pre;transform:scaleX(1.1107);transform-origin:0 0;">Mileage</div>
<div style="left:1268.40px;top:532.00px;font-family:'Liberation Sans',sans-serif;font-size:13px;line-height:13px;font-weight:400;color:#000;white-space:pre;transform:scaleX(0.9769);transform-origin:0 0;">1623-405-21</div>
<div style="left:24.40px;top:12.00px;font-family:'Liberation Sans',sans-serif;font-size:12.5px;line-height:12.5px;font-weight:400;color:#ffffff;white-space:pre;transform:scaleX(0.9087);transform-origin:0 0;">AutoSave</div>
<svg style="left:80px;top:9px" width="40" height="17"><rect x="1.5" y="0.75" width="37" height="15.5" rx="7.75" fill="none" stroke="#fff" stroke-width="1.3"/><circle cx="9" cy="8.5" r="4" fill="#fff"/></svg>
<div style="left:100.00px;top:12.00px;font-family:'Liberation Sans',sans-serif;font-size:10.5px;line-height:10.5px;font-weight:400;color:#ffffff;white-space:pre;transform:scaleX(0.9212);transform-origin:0 0;">Off</div>
<svg style="left:133px;top:10px" width="19" height="18"><path d="M1.5,1.5 H16.5 V16.5 H4.5 L1.5,13.5 Z" fill="none" stroke="#fff" stroke-width="1.3"/><rect x="5.2" y="1.5" width="7.8" height="6" fill="none" stroke="#fff" stroke-width="1.2"/><rect x="5.2" y="11.3" width="7.8" height="5.2" fill="none" stroke="#fff" stroke-width="1.2"/></svg>
<svg style="left:162px;top:10px" width="70" height="18"><path d="M2.5,3 V9 H8.5" fill="none" stroke="#6ea585" stroke-width="1.1"/><path d="M2.8,8.8 C6,3 15.5,2 15.8,9 C16,13 12,15 9.5,17" fill="none" stroke="#6ea585" stroke-width="1.1"/><path d="M21.8,6 L24.5,8.6 L27.2,6" fill="none" stroke="#6ea585" stroke-width="1"/><path d="M53.5,3 V9 H47.5" fill="none" stroke="#6ea585" stroke-width="1.1"/><path d="M53.2,8.8 C50,3 40.5,2 40.2,9 C40,13 44,15 46.5,17" fill="none" stroke="#6ea585" stroke-width="1.1"/><path d="M60,6 L62.7,8.6 L65.4,6" fill="none" stroke="#6ea585" stroke-width="1"/></svg>
<svg style="left:242px;top:14px" width="10" height="8"><path d="M0.5,0.8 H8.5" stroke="#fff" stroke-width="1.2"/><path d="M1.2,3.2 L4.5,6.3 L7.8,3.2" fill="none" stroke="#fff" stroke-width="1.3"/></svg>
<div style="left:633.60px;top:12.00px;font-family:'Liberation Sans',sans-serif;font-size:12.3px;line-height:12.3px;font-weight:400;color:#ffffff;white-space:pre;transform:scaleX(0.9380);transform-origin:0 0;">Generic Revenue Import File</div>
<svg style="left:788px;top:17px" width="6" height="4"><polygon points="0,0 5.5,0 2.75,3" fill="#fff"/></svg>
<div style="left:1136.20px;top:13.00px;font-family:'Liberation Sans',sans-serif;font-size:12.5px;line-height:12.5px;font-weight:400;color:#ffffff;white-space:pre;transform:scaleX(0.9262);transform-origin:0 0;">Alex Ruppe</div>
<svg style="left:1207px;top:6px" width="25" height="25"><defs><clipPath id="av"><circle cx="12.1" cy="12" r="11.9"/></clipPath></defs><g clip-path="url(#av)"><rect width="25" height="25" fill="#bdbdbd"/><rect x="0" y="0" width="9" height="25" fill="#b0b0b0"/><path d="M8,2 C12,0 18,0.5 21,3 L23,9 L22,17 L16,18 L10,16 L9,9 Z" fill="#dedede"/><path d="M19,7 L25,8 V20 L19,19 Z" fill="#e8e8e8"/><path d="M7,1.5 C10,-0.5 16,-0.5 19.5,1.5 L18,3.2 C14,2.5 11,2.5 9.5,4 L9.2,10 L7.2,9.5 Z" fill="#1a1a1a"/><path d="M10.5,6.8 L16,6.2" stroke="#2a2a2a" stroke-width="1.3"/><path d="M13,12.5 L17,11.5" stroke="#555" stroke-width="1"/><path d="M0,16 C3,14 7,16 9,18 L14,20 L20,18 L25,19 V25 H0 Z" fill="#6a6a6a"/><path d="M3,13 L5,15 M6,18 L8,22 M11,21 L13,24 M17,20 L19,23 M1,20 L3,23" stroke="#2e2e2e" stroke-width="1.4"/><path d="M8,19 L10,20 M14,22 L16,21 M20,21 L22,23" stroke="#d0d0d0" stroke-width="1.2"/></g></svg>
<svg style="left:1258px;top:11px" width="16" height="13"><rect x="1.5" y="1.5" width="13" height="10" fill="none" stroke="#fff" stroke-width="1"/><path d="M1.5,3.5 H14.5" stroke="#fff" stroke-width="1"/><path d="M8,11.5 V6 M5.8,8.2 L8,6 L10.2,8.2" fill="none" stroke="#fff" stroke-width="1"/></svg>
<div style="left:1307px;top:17px;width:11px;height:1px;background:#fff;"></div>
<div style="left:1353px;top:12px;width:9px;height:9px;border:1px solid #fff"></div>
<svg style="left:1398px;top:11px" width="12" height="12"><path d="M1,1 L11,11 M11,1 L1,11" stroke="#fff" stroke-width="1.1"/></svg>
<div style="left:17.37px;top:45.00px;font-family:'Liberation Sans',sans-serif;font-size:12.6px;line-height:12.6px;font-weight:400;color:#444444;white-space:pre;transform:scaleX(0.9332);transform-origin:0 0;">File</div>
<div style="left:132.97px;top:45.00px;font-family:'Liberation Sans',sans-serif;font-size:12.6px;line-height:12.6px;font-weight:400;color:#444444;white-space:pre;transform:scaleX(1.0323);transform-origin:0 0;">Insert</div>
<div style="left:195.99px;top:45.00px;font-family:'Liberation Sans',sans-serif;font-size:12.6px;line-height:12.6px;font-weight:400;color:#444444;white-space:pre;transform:scaleX(1.0110);transform-origin:0 0;">Page Layout</div>
<div style="left:297.18px;top:45.00px;font-family:'Liberation Sans',sans-serif;font-size:12.6px;line-height:12.6px;font-weight:400;color:#444444;white-space:pre;transform:scaleX(1.0237);transform-origin:0 0;">Formulas</div>
<div style="left:378.96px;top:45.00px;font-family:'Liberation Sans',sans-serif;font-size:12.6px;line-height:12.6px;font-weight:400;color:#444444;white-space:pre;transform:scaleX(1.0352);transform-origin:0 0;">Data</div>
<div style="left:434.92px;top:45.00px;font-family:'Liberation Sans',sans-serif;font-size:12.6px;line-height:12.6px;font-weight:400;color:#444444;white-space:pre;transform:scaleX(0.9782);transform-origin:0 0;">Review</div>
<div style="left:504.00px;top:45.00px;font-family:'Liberation Sans',sans-serif;font-size:12.6px;line-height:12.6px;font-weight:400;color:#444444;white-space:pre;transform:scaleX(0.9616);transform-origin:0 0;">View</div>
<div style="left:558.36px;top:45.00px;font-family:'Liberation Sans',sans-serif;font-size:12.6px;line-height:12.6px;font-weight:400;color:#444444;white-space:pre;transform:scaleX(1.0403);transform-origin:0 0;">Help</div>
<div style="left:654.00px;top:45.00px;font-family:'Liberation Sans',sans-serif;font-size:12.6px;line-height:12.6px;font-weight:400;color:#555;white-space:pre;transform:scaleX(0.9624);transform-origin:0 0;">Search</div>
<div style="left:68.17px;top:45.00px;font-family:'Liberation Sans',sans-serif;font-size:12.6px;line-height:12.6px;font-weight:400;color:#333;white-space:pre;transform:scaleX(1.1261);transform-origin:0 0;-webkit-text-stroke:0.2px #333;">Home</div>
<div style="left:69px;top:60px;width:38px;height:3px;background:#217346;"></div>
<svg style="left:625px;top:43px" width="16" height="16"><circle cx="9.5" cy="6" r="4.6" fill="none" stroke="#555" stroke-width="1.1"/><path d="M6.3,9.3 L1,14.8" stroke="#555" stroke-width="1.2"/></svg>
<div style="left:1240px;top:39px;width:65px;height:21px;background:#fff;border:1px solid #e1dfdd;border-radius:3px"></div>
<div style="left:1315px;top:39px;width:98px;height:21px;background:#fff;border:1px solid #e1dfdd;border-radius:3px"></div>
<div style="left:1262.50px;top:45.00px;font-family:'Liberation Sans',sans-serif;font-size:12.8px;line-height:12.8px;font-weight:400;color:#217346;white-space:pre;transform:scaleX(1.0138);transform-origin:0 0;-webkit-text-stroke:0.5px #217346;">Share</div>
<div style="left:1339.00px;top:45.00px;font-family:'Liberation Sans',sans-serif;font-size:12.8px;line-height:12.8px;font-weight:400;color:#217346;white-space:pre;transform:scaleX(1.0689);transform-origin:0 0;-webkit-text-stroke:0.5px #217346;">Comments</div>
<svg style="left:1246px;top:42px" width="14" height="14"><path d="M6,4 H1.5 V12.5 H11 V9" fill="none" stroke="#217346" stroke-width="1.1"/><path d="M4.5,10 C5,6 8,4.5 11,4.5 M9,2 L11.8,4.5 L9,7" fill="none" stroke="#217346" stroke-width="1.1"/></svg>
<svg style="left:1322px;top:43px" width="14" height="13"><path d="M1.5,1.5 H12.5 V8.5 H6 L3,11.5 V8.5 H1.5 Z" fill="none" stroke="#217346" stroke-width="1.1"/></svg>
<div style="left:6px;top:172px;width:102px;height:26px;background:#fff;box-sizing:border-box;border:1px solid #c6c6c6;"></div>
<div style="left:12.65px;top:179.00px;font-family:'Liberation Sans',sans-serif;font-size:13px;line-height:13px;font-weight:400;color:#222;white-space:pre;transform:scaleX(0.9482);transform-origin:0 0;">L27</div>
<svg style="left:94px;top:183px" width="8" height="5"><polygon points="0,0 7.5,0 3.75,4" fill="#555"/></svg>
<div style="left:122px;top:180px;width:2px;height:2px;background:#a0a0a0;"></div>
<div style="left:122px;top:184px;width:2px;height:2px;background:#a0a0a0;"></div>
<div style="left:122px;top:188px;width:2px;height:2px;background:#a0a0a0;"></div>
<div style="left:138px;top:172px;width:110px;height:26px;background:#fff;box-sizing:border-box;border:1px solid #c6c6c6;"></div>
<svg style="left:151px;top:179px" width="12" height="12"><path d="M1,1 L10.5,10.5 M10.5,1 L1,10.5" stroke="#bdbdbd" stroke-width="1.3"/></svg>
<svg style="left:186px;top:179px" width="14" height="12"><path d="M1.5,6.5 L5.5,10 L13,1.5" fill="none" stroke="#cacaca" stroke-width="2"/></svg>
<svg style="left:220px;top:174px" width="22" height="20"><text x="3.5" y="15" font-family="Liberation Serif" font-style="italic" font-weight="700" font-size="14.5" fill="#555">f</text><text x="9.2" y="15" font-family="Liberation Serif" font-style="italic" font-weight="700" font-size="10.5" fill="#555">x</text></svg>
<div style="left:251px;top:172px;width:1171px;height:26px;background:#fff;box-sizing:border-box;border:1px solid #c6c6c6;"></div>
<svg style="left:1409px;top:181px" width="9" height="6"><path d="M1,1 L4.5,4.5 L8,1" fill="none" stroke="#555" stroke-width="1.6"/></svg>
<div style="left:1409px;top:210px;width:15px;height:15px;background:#fff;box-sizing:border-box;border:1px solid #ababab;"></div>
<svg style="left:1412px;top:214px" width="9" height="6"><polygon points="0,5 8,5 4,0.5" fill="#6e6e6e"/></svg>
<div style="left:1409px;top:225px;width:15px;height:357px;background:#fff;box-sizing:border-box;border:1px solid #ababab;"></div>
<div style="left:1410px;top:582px;width:13px;height:19px;background:#dadada;"></div>
<div style="left:1409px;top:601px;width:15px;height:15px;background:#fff;box-sizing:border-box;border:1px solid #ababab;"></div>
<svg style="left:1412px;top:606px" width="9" height="6"><polygon points="0,0.5 8,0.5 4,5" fill="#6e6e6e"/></svg>
<svg style="left:27px;top:624px" width="36" height="10"><polygon points="5,0.5 5,8.5 1,4.5" fill="#c6c6c6"/><polygon points="30,0.5 30,8.5 34,4.5" fill="#c6c6c6"/></svg>
<div style="left:101px;top:615px;width:60px;height:23px;background:#fff;border-left:1px solid #a6a6a6;border-right:1px solid #a6a6a6"></div>
<div style="left:101px;top:638px;width:62px;height:2px;background:#217346;"></div>
<div style="left:113.50px;top:622.00px;font-family:'Liberation Sans',sans-serif;font-size:13.2px;line-height:13.2px;font-weight:700;color:#1e6c3f;white-space:pre;transform:scaleX(0.9239);transform-origin:0 0;">Result</div>
<svg style="left:195px;top:620px" width="18" height="18"><circle cx="9" cy="9" r="7.6" fill="none" stroke="#7a7a7a" stroke-width="1.1"/><path d="M9,4.5 V13.5 M4.5,9 H13.5" stroke="#6a6a6a" stroke-width="1.5"/></svg>
<div style="left:856px;top:624px;width:2px;height:2px;background:#9a9a9a;"></div>
<div style="left:856px;top:628px;width:2px;height:2px;background:#9a9a9a;"></div>
<div style="left:856px;top:632px;width:2px;height:2px;background:#9a9a9a;"></div>
<div style="left:873px;top:622px;width:15px;height:15px;background:#fff;box-sizing:border-box;border:1px solid #ababab;"></div>
<svg style="left:877px;top:625px" width="6" height="9"><polygon points="5,0.5 5,8 0.5,4.25" fill="#6e6e6e"/></svg>
<div style="left:888px;top:622px;width:461px;height:15px;background:#fff;box-sizing:border-box;border:1px solid #ababab;"></div>
<div style="left:1349px;top:623px;width:42px;height:13px;background:#dadada;"></div>
<div style="left:1391px;top:622px;width:15px;height:15px;background:#fff;box-sizing:border-box;border:1px solid #ababab;"></div>
<svg style="left:1396px;top:625px" width="6" height="9"><polygon points="0.5,0.5 0.5,8 5,4.25" fill="#6e6e6e"/></svg>
<svg style="left:8px;top:647px" width="17" height="15"><rect x="1.5" y="1.5" width="12" height="10" fill="none" stroke="#444" stroke-width="1"/><path d="M1.5,3.5 H13.5 M3,6 H6 M3,8.5 H6" stroke="#444" stroke-width="1"/><circle cx="11.5" cy="9.5" r="4" fill="#f3f2f1" stroke="#444" stroke-width="1"/><circle cx="11.5" cy="9.5" r="1.8" fill="#444"/></svg>
<div style="left:1116px;top:644px;width:40px;height:21px;background:#c8c6c4;"></div>
<svg style="left:1128px;top:646px" width="15" height="15"><path d="M1.5,1.5 h12 v12 h-12 z M5.5,1.5 v12 M9.5,1.5 v12 M1.5,5.5 h12 M1.5,9.5 h12" fill="none" stroke="#2b2b2b" stroke-width="1.6"/></svg>
<svg style="left:1168px;top:646px" width="16" height="15"><rect x="1" y="1" width="14" height="13" fill="none" stroke="#444" stroke-width="1.1"/><rect x="4" y="3.5" width="8" height="8" fill="none" stroke="#444" stroke-width="1"/><path d="M5.5,5.8 h5 M5.5,7.6 h5 M5.5,9.4 h5" stroke="#444" stroke-width="0.9"/></svg>
<svg style="left:1208px;top:646px" width="16" height="15"><rect x="1" y="1" width="14" height="13" fill="none" stroke="#444" stroke-width="1.1"/><path d="M4.5,1 V8.5 H10.5 V1 M7.5,1 V8.5" fill="none" stroke="#444" stroke-width="1"/></svg>
<div style="left:1242px;top:653px;width:9px;height:1px;background:#444;"></div>
<div style="left:1255px;top:654px;width:101px;height:1px;background:#a6a6a6;"></div>
<div style="left:1303px;top:648px;width:6px;height:11px;background:#6e6e6e;"></div>
<div style="left:1359px;top:654px;width:10px;height:1px;background:#444;"></div>
<div style="left:1363px;top:649px;width:1px;height:11px;background:#444;"></div>
<div style="left:1382.00px;top:649.00px;font-family:'Liberation Sans',sans-serif;font-size:11.2px;line-height:11.2px;font-weight:400;color:#444;white-space:pre;transform:scaleX(0.8896);transform-origin:0 0;">100%</div>
<svg style="left:0;top:0" width="1428" height="170"><rect x="96" y="69" width="1" height="88" fill="#c0c0c0"/><rect x="322" y="69" width="1" height="88" fill="#c0c0c0"/><rect x="596" y="69" width="1" height="88" fill="#c0c0c0"/><rect x="746" y="69" width="1" height="88" fill="#c0c0c0"/><rect x="940" y="69" width="1" height="88" fill="#c0c0c0"/><rect x="1083" y="69" width="1" height="88" fill="#c0c0c0"/><rect x="1227" y="69" width="1" height="88" fill="#c0c0c0"/><rect x="1285" y="69" width="1" height="88" fill="#c0c0c0"/><rect x="1358" y="69" width="1" height="88" fill="#c0c0c0"/><rect x="19.6" y="77.4" width="19.8" height="23.2" fill="#f7f7f7" stroke="#d87b1e" stroke-width="1.1"/><rect x="21" y="78.8" width="17" height="20.4" fill="none" stroke="#fcd592" stroke-width="1.2"/><path d="M23.5,80.5 V76.2 H27 C27.5,73.5 29,72.8 29.5,72.8 C30,72.8 31.5,73.5 32,76.2 H35.5 V80.5 Z" fill="#fff" stroke="#777" stroke-width="1"/><rect x="30.8" y="84" width="16.2" height="19.6" fill="#f3f2f1"/><rect x="32.6" y="85.6" width="12.8" height="16.6" fill="#f8f8f8" stroke="#3f3f3f" stroke-width="1.3"/><path d="M26.8,128 L29.6,131 L32.4,128" fill="none" stroke="#555" stroke-width="1.1"/><path d="M59.3,72.2 L64.2,84 M65.5,72.2 L60.6,84" stroke="#444" stroke-width="1.1"/><circle cx="59" cy="85.9" r="1.9" fill="none" stroke="#2b88d8" stroke-width="1.3"/><circle cx="65.2" cy="85.9" r="1.9" fill="none" stroke="#2b88d8" stroke-width="1.3"/><path d="M57.5,109.3 H54.6 V96.6 H60 L61.5,98" fill="none" stroke="#333" stroke-width="1.1"/><path d="M60.8,99.5 H66.5 L69.6,102.6 V111.3 H60.8 Z" fill="#fafafa" stroke="#333" stroke-width="1.1"/><path d="M63,106.5 H67.5 M63,108.8 H67.5" stroke="#444" stroke-width="0.9"/><path d="M76.9,103.3 L79.7,106.1 L82.5,103.3" fill="none" stroke="#555" stroke-width="1.1"/><path d="M55,129 L62.5,123.5 L67,128.5 L61.5,134.5 Z" fill="#fbe4c8" stroke="#e07b28" stroke-width="1.2"/><path d="M57.5,130.5 L61,127.5 L63.5,130.3 L60.5,133 Z" fill="#f6c67a"/><path d="M62.8,123.2 L66.9,127.8 L69.8,124.6 L65.8,120.3 Z" fill="#fff" stroke="#3d3d3d" stroke-width="1.1"/><path d="M67.8,122.2 L69.8,120.2" stroke="#3d3d3d" stroke-width="1.6"/><path d="M85.5,152.5 V149.5 H88.5" fill="none" stroke="#444" stroke-width="1"/><path d="M87.5,151.5 L92,156" stroke="#444" stroke-width="1"/><path d="M92.5,152.5 V156.5 H88.5" fill="none" stroke="#444" stroke-width="1"/><rect x="105.5" y="77.5" width="121.5" height="21.5" fill="#fff" stroke="#c6c6c6" stroke-width="1"/><rect x="228.5" y="77.5" width="42" height="21.5" fill="#fff" stroke="#c6c6c6" stroke-width="1"/><path d="M218,88 L221.0,91 L224,88" fill="none" stroke="#444" stroke-width="1.2"/><path d="M261.5,88 L264.5,91 L267.5,88" fill="none" stroke="#444" stroke-width="1.2"/><path d="M275.3,92.8 L280.5,80.3 L285.7,92.8 M277.3,88.2 H283.8" fill="none" stroke="#333" stroke-width="1.15"/><path d="M285,84 L287.5,81.4 L290,84" fill="none" stroke="#2b88d8" stroke-width="1.2"/><path d="M298.9,92.8 L303,83.2 L307.1,92.8 M300.4,89 H305.6" fill="none" stroke="#333" stroke-width="1.15"/><path d="M307.2,81.2 L309.6,83.7 L312,81.2" fill="none" stroke="#2b88d8" stroke-width="1.2"/><path d="M136.6,114.6 H141.2 M134.6,123.4 H139.2 M139.3,114.6 L136.6,123.4" fill="none" stroke="#333" stroke-width="1.1"/><path d="M174.5,119.2 L177.3,122.0 L180.1,119.2" fill="none" stroke="#555" stroke-width="1.1"/><rect x="190" y="110" width="1" height="21" fill="#c0c0c0"/><path d="M198.3,112.3 H212.5 V125.5 M198.3,112.3 V125.5 M205.4,112.3 V125.5 M198.3,118.9 H212.5" fill="none" stroke="#555" stroke-width="0.9" stroke-dasharray="1,1"/><rect x="197.8" y="125.6" width="15.2" height="1.4" fill="#222"/><path d="M220.5,119.2 L223.3,122.0 L226.1,119.2" fill="none" stroke="#555" stroke-width="1.1"/><rect x="236" y="110" width="1" height="21" fill="#c0c0c0"/><path d="M246.6,118.4 L251.4,113.6 L256.2,118.4 L251.4,123.2 Z" fill="#fff" stroke="#333" stroke-width="1.1"/><path d="M252.2,117.6 V112.8 C252.2,111.6 254,111.6 254,112.8 V117" fill="none" stroke="#333" stroke-width="1.1"/><path d="M255.6,115.6 C257.6,116.4 258.2,119 257.5,122" fill="none" stroke="#1e73be" stroke-width="1.6"/><rect x="243.8" y="124" width="16.2" height="4" fill="#ffff00"/><path d="M266.6,119.2 L269.40000000000003,122.0 L272.20000000000005,119.2" fill="none" stroke="#555" stroke-width="1.1"/><path d="M284,123 L288.8,112.2 L293.6,123 M285.8,119.2 H291.8" fill="none" stroke="#333" stroke-width="1.1"/><rect x="281" y="124" width="16" height="4" fill="#f00000"/><path d="M303.5,119.2 L306.3,122.0 L309.1,119.2" fill="none" stroke="#555" stroke-width="1.1"/><path d="M311.5,152.5 V149.5 H314.5" fill="none" stroke="#444" stroke-width="1"/><path d="M313.5,151.5 L318,156" stroke="#444" stroke-width="1"/><path d="M318.5,152.5 V156.5 H314.5" fill="none" stroke="#444" stroke-width="1"/><rect x="335" y="80" width="14" height="1.2" fill="#333"/><rect x="337" y="84" width="10" height="1.2" fill="#333"/><rect x="335" y="88" width="14" height="1.2" fill="#333"/><rect x="357" y="83" width="14" height="1.2" fill="#333"/><rect x="359" y="87" width="10" height="1.2" fill="#333"/><rect x="357" y="91" width="14" height="1.2" fill="#333"/><rect x="375" y="77" width="22" height="23" fill="#c8c6c4"/><rect x="379" y="87" width="14" height="1.2" fill="#333"/><rect x="381" y="91" width="10" height="1.2" fill="#333"/><rect x="379" y="95" width="14" height="1.2" fill="#333"/><rect x="401" y="78" width="1" height="21" fill="#c0c0c0"/><text x="409" y="91" font-family="Liberation Sans" font-size="9" fill="#444" transform="rotate(-45 413 87)">ab</text><path d="M414.5,94.5 L424.5,84.5 M420,84 H425 V89" fill="none" stroke="#2b88d8" stroke-width="1.2"/><path d="M430,88.3 L432.8,91.1 L435.6,88.3" fill="none" stroke="#555" stroke-width="1.1"/><rect x="454" y="75" width="1" height="59" fill="#c0c0c0"/><text x="463.5" y="88" font-family="Liberation Sans" font-size="8.5" fill="#444">ab</text><text x="463.5" y="95.5" font-family="Liberation Sans" font-size="8.5" fill="#444">c</text><path d="M470.5,93.5 H476 C478.5,93.5 478.5,89 476,89 H471" fill="none" stroke="#2b88d8" stroke-width="1.2"/><path d="M472.5,91.5 L470.3,93.5 L472.5,95.5" fill="none" stroke="#2b88d8" stroke-width="1.1"/><rect x="335" y="113" width="14" height="1.2" fill="#333"/><rect x="335" y="117" width="10" height="1.2" fill="#333"/><rect x="335" y="121" width="14" height="1.2" fill="#333"/><rect x="335" y="125" width="10" height="1.2" fill="#333"/><rect x="357" y="113" width="14" height="1.2" fill="#333"/><rect x="359" y="117" width="10" height="1.2" fill="#333"/><rect x="357" y="121" width="14" height="1.2" fill="#333"/><rect x="359" y="125" width="10" height="1.2" fill="#333"/><rect x="379" y="113" width="14" height="1.2" fill="#333"/><rect x="383" y="117" width="10" height="1.2" fill="#333"/><rect x="379" y="121" width="14" height="1.2" fill="#333"/><rect x="383" y="125" width="10" height="1.2" fill="#333"/><rect x="401" y="110" width="1" height="21" fill="#c0c0c0"/><rect x="410" y="113" width="14" height="1.2" fill="#333"/><rect x="418" y="117" width="6" height="1.2" fill="#333"/><rect x="418" y="121" width="6" height="1.2" fill="#333"/><rect x="410" y="125" width="14" height="1.2" fill="#333"/><path d="M416.5,119.5 H410.8 M413.3,117 L410.8,119.5 L413.3,122" fill="none" stroke="#2b88d8" stroke-width="1.3"/><rect x="432" y="113" width="14" height="1.2" fill="#333"/><rect x="440" y="117" width="6" height="1.2" fill="#333"/><rect x="440" y="121" width="6" height="1.2" fill="#333"/><rect x="432" y="125" width="14" height="1.2" fill="#333"/><path d="M432,119.5 H437.7 M435.2,117 L437.7,119.5 L435.2,122" fill="none" stroke="#2b88d8" stroke-width="1.3"/><rect x="462.3" y="112.5" width="14.2" height="13.8" fill="#fafafa" stroke="#333" stroke-width="1.1"/><path d="M462.3,115.5 H476.5 M462.3,123.3 H476.5 M469.4,112.5 V115.5 M469.4,123.3 V126.3" stroke="#333" stroke-width="1"/><rect x="462.8" y="115.8" width="13.2" height="7.2" fill="#fff" stroke="#2b88d8" stroke-width="1"/><path d="M465,119.4 H474 M467,117.5 L465,119.4 L467,121.3 M472,117.5 L474,119.4 L472,121.3" fill="none" stroke="#2b88d8" stroke-width="1"/><path d="M576.7,119.2 L579.5,122.0 L582.3000000000001,119.2" fill="none" stroke="#555" stroke-width="1.1"/><path d="M585.5,152.5 V149.5 H588.5" fill="none" stroke="#444" stroke-width="1"/><path d="M587.5,151.5 L592,156" stroke="#444" stroke-width="1"/><path d="M592.5,152.5 V156.5 H588.5" fill="none" stroke="#444" stroke-width="1"/><rect x="605.5" y="77.5" width="133" height="21.5" fill="#fff" stroke="#c6c6c6" stroke-width="1"/><path d="M729.3,88 L732.3,91 L735.3,88" fill="none" stroke="#444" stroke-width="1.2"/><path d="M630.8,119.2 L633.5999999999999,122.0 L636.4,119.2" fill="none" stroke="#555" stroke-width="1.1"/><rect x="690" y="110" width="1" height="21" fill="#c0c0c0"/><path d="M615.5,112.5 V127.6" stroke="#333" stroke-width="1"/><path d="M618.8,116 C618,114.2 616.8,113.8 615.5,113.8 C613.5,113.8 612.3,115 612.3,116.6 C612.3,120 618.9,119.5 618.9,123.3 C618.9,125 617.5,126.2 615.5,126.2 C613.8,126.2 612.6,125.5 611.9,123.8" fill="none" stroke="#333" stroke-width="1.15"/><circle cx="648.6" cy="116.6" r="2.6" fill="none" stroke="#333" stroke-width="1.15"/><circle cx="657.5" cy="123.4" r="2.6" fill="none" stroke="#333" stroke-width="1.15"/><path d="M658.3,113.4 L647.6,126.8" stroke="#333" stroke-width="1.15"/><path d="M706.5,116.6 H699 M702,113.6 L699,116.6 L702,119.6" fill="none" stroke="#2b88d8" stroke-width="1.2"/><text x="707.6" y="120.2" font-family="Liberation Sans" font-size="9.6" fill="#333">0</text><text x="700.2" y="127.4" font-family="Liberation Sans" font-size="9.6" fill="#333">.00</text><text x="721.6" y="120.2" font-family="Liberation Sans" font-size="9.6" fill="#333">.00</text><text x="728.6" y="127.4" font-family="Liberation Sans" font-size="9.6" fill="#333">.0</text><path d="M720.2,123.6 H728.6 M725.6,120.6 L728.6,123.6 L725.6,126.6" fill="none" stroke="#2b88d8" stroke-width="1.2"/><circle cx="676" cy="117.3" r="3.1" fill="#333"/><path d="M678.6,118 C679,122 676,125 672.3,126.3 L672,125.2 C674.5,124 676,122 676,119.5 Z" fill="#333"/><path d="M735.5,152.5 V149.5 H738.5" fill="none" stroke="#444" stroke-width="1"/><path d="M737.5,151.5 L742,156" stroke="#444" stroke-width="1"/><path d="M742.5,152.5 V156.5 H738.5" fill="none" stroke="#444" stroke-width="1"/><rect x="778.5" y="76.5" width="27" height="21" fill="#fafafa" stroke="#3b3b3b" stroke-width="1.2"/><path d="M778.5,83.5 H805.5 M778.5,90.5 H805.5 M783.5,76.5 V97.5 M800.5,76.5 V97.5 M795,76.5 V97.5" stroke="#777" stroke-width="0.9"/><rect x="783.5" y="76.8" width="12" height="6.7" fill="#f4a0a8" stroke="#d13438" stroke-width="1.1"/><rect x="783.5" y="83.5" width="8" height="7" fill="#8cc0ec" stroke="#1e6fbf" stroke-width="1.1"/><rect x="783.5" y="90.5" width="14" height="6.8" fill="#f4a0a8" stroke="#d13438" stroke-width="1.1"/><rect x="844.5" y="76.5" width="27" height="21" fill="#fafafa" stroke="#3b3b3b" stroke-width="1.2"/><path d="M844.5,83.5 H871.5 M844.5,90.5 H871.5 M853.5,76.5 V97.5 M862.8,76.5 V97.5" stroke="#777" stroke-width="0.9"/><rect x="853.5" y="83.5" width="18" height="14" fill="#8cc0ec" stroke="#1e6fbf" stroke-width="1.1"/><path d="M853.5,90.5 H871.5 M862.8,83.5 V97.5" stroke="#1e6fbf" stroke-width="1"/><path d="M859,96 L872,83.5 C873.5,82.3 875,83.5 874,85 L861.5,98.5" fill="#fff" stroke="#3b3b3b" stroke-width="1.1"/><path d="M858.5,95.5 C855,96 855.5,100 851,102.5 C855.5,104 861,101.5 861.5,98.5 Z" fill="#8cc0ec" stroke="#1e6fbf" stroke-width="1"/><rect x="896.5" y="76.5" width="27" height="21" fill="#fafafa" stroke="#3b3b3b" stroke-width="1.2"/><path d="M896.5,81.2 H923.5 M896.5,92.4 H923.5 M901.5,76.5 V97.5 M918.8,76.5 V97.5" stroke="#777" stroke-width="0.9"/><rect x="901.5" y="81.2" width="17.3" height="11.2" fill="#8cc0ec" stroke="#1e6fbf" stroke-width="1.1"/><path d="M911,96 L924,83.5 C925.5,82.3 927,83.5 926,85 L913.5,98.5" fill="#fff" stroke="#3b3b3b" stroke-width="1.1"/><path d="M910.5,95.5 C907,96 907.5,100 903,102.5 C907.5,104 913,101.5 913.5,98.5 Z" fill="#8cc0ec" stroke="#1e6fbf" stroke-width="1"/><path d="M819.8,128.2 L822.5,130.89999999999998 L825.1999999999999,128.2" fill="none" stroke="#555" stroke-width="1.1"/><path d="M870,128.2 L872.6,130.79999999999998 L875.2,128.2" fill="none" stroke="#555" stroke-width="1.1"/><path d="M923,128.2 L925.6,130.79999999999998 L928.2,128.2" fill="none" stroke="#555" stroke-width="1.1"/><rect x="956.5" y="76.8" width="27" height="20.4" fill="#fafafa" stroke="#3b3b3b" stroke-width="1.2"/><path d="M965.5,76.8 V97.2 M974.6,76.8 V97.2" stroke="#6b6b6b" stroke-width="0.9"/><rect x="961" y="83.3" width="24.5" height="7.3" fill="#8cc0ec" stroke="#1e6fbf" stroke-width="1.1"/><path d="M974.6,83.3 V90.6" stroke="#1e6fbf" stroke-width="1"/><path d="M967.5,86.9 H955.5 M960.8,81.3 L954.8,86.9 L960.8,92.5" fill="none" stroke="#f3f2f1" stroke-width="3"/><path d="M967.5,86.9 H955.5 M960.8,81.3 L954.8,86.9 L960.8,92.5" fill="none" stroke="#2b88d8" stroke-width="1.2"/><path d="M998.8,83.3 V76.8 H1025.3 V82 M998.8,90.6 V97.2 H1025.3 V92" fill="none" stroke="#3b3b3b" stroke-width="1.2"/><path d="M1008,76.8 V83.3 M1017,76.8 V83.3 M1008,90.6 V97.2 M1017,90.6 V97.2 M998.8,83.3 H1002.4 M998.8,90.6 H1002.4" stroke="#6b6b6b" stroke-width="0.9"/><path d="M1002.4,83.3 H1017 L1020,86.9 L1017,90.6 H1002.4 Z" fill="#8cc0ec" stroke="#1e6fbf" stroke-width="1.1"/><path d="M1009.5,83.3 V90.6" stroke="#1e6fbf" stroke-width="1"/><path d="M1016.2,81.8 L1027,93 M1027,81.8 L1016.2,93" stroke="#e8413c" stroke-width="1.2"/><rect x="1040.5" y="76.8" width="27.2" height="20.4" fill="#fafafa" stroke="#3b3b3b" stroke-width="1.2"/><path d="M1047.6,76.8 V97.2 M1061,76.8 V97.2 M1040.5,83.3 H1067.7 M1040.5,90.6 H1067.7" stroke="#6b6b6b" stroke-width="0.9"/><rect x="1047.6" y="83.3" width="13.4" height="7.3" fill="#8cc0ec" stroke="#1e6fbf" stroke-width="1.1"/><path d="M1046.6,72.4 H1061.6 M1046.6,70.8 V74 M1061.6,70.8 V74" stroke="#2b88d8" stroke-width="1.1"/><path d="M966.5,128.3 L969.1,130.9 L971.7,128.3" fill="none" stroke="#555" stroke-width="1.1"/><path d="M1009,128.3 L1011.6,130.9 L1014.2,128.3" fill="none" stroke="#555" stroke-width="1.1"/><path d="M1051.5,128.3 L1054.1,130.9 L1056.7,128.3" fill="none" stroke="#555" stroke-width="1.1"/><path d="M1109,72.6 H1097.3 L1103.3,79 L1097.3,85.4 H1109" fill="none" stroke="#333" stroke-width="1.2"/><path d="M1117.7,78.2 L1120.45,80.8 L1123.2,78.2" fill="none" stroke="#555" stroke-width="1.1"/><rect x="1095.5" y="95.5" width="14.6" height="12.6" fill="#fafafa" stroke="#333" stroke-width="1.1"/><path d="M1095.5,97.3 H1110.1" stroke="#333" stroke-width="1"/><path d="M1102.7,99.5 V106.3 M1100.3,104 L1102.7,106.5 L1105.1,104" fill="none" stroke="#2b88d8" stroke-width="1.2"/><path d="M1115.9,101.6 L1118.65,104.19999999999999 L1121.4,101.6" fill="none" stroke="#555" stroke-width="1.1"/><path d="M1104.8,117.8 L1110.1,122.9 L1100.5,132.3 L1095.4,127.2 Z" fill="#fafafa" stroke="#a33ab3" stroke-width="1.3" stroke-linejoin="miter"/><path d="M1099.7,123 L1104.9,128 L1100.5,132.3 L1095.4,127.2 Z" fill="#d69be0" stroke="#a33ab3" stroke-width="1.3"/><path d="M1115.9,124.6 L1118.65,127.19999999999999 L1121.4,124.6" fill="none" stroke="#555" stroke-width="1.1"/><text x="1136.8" y="85.8" font-family="Liberation Sans" font-size="15" fill="#2b88d8">A</text><path d="M1137.8,88.6 H1145.8 L1137.8,99.2 H1146.3" fill="none" stroke="#333" stroke-width="1.1"/><path d="M1149.5,80.8 H1164.8 L1158.8,88 V95.2 H1155.5 V88 Z" fill="#fafafa" stroke="#333" stroke-width="1.1"/><circle cx="1198.6" cy="83.3" r="10.2" fill="#fafafa" stroke="#333" stroke-width="1.1"/><path d="M1191.3,90.6 L1180.5,101.4" stroke="#333" stroke-width="1.1"/><path d="M1162,128.2 L1164.5,130.7 L1167,128.2" fill="none" stroke="#555" stroke-width="1.1"/><path d="M1209,128.2 L1211.5,130.7 L1214,128.2" fill="none" stroke="#555" stroke-width="1.1"/><path d="M1258.1,73.1 H1264.6 L1257.8,85.1 H1266.7 L1249.1,100.7 H1247.3 L1254.4,88.6 H1245.4 Z" fill="#8cc0ec" stroke="#1a6bbf" stroke-width="1.1" stroke-linejoin="miter"/><path d="M1322.5,73.6 H1311.6 V100.2 H1331.6 V88" fill="#ececec" stroke="#b4b4b4" stroke-width="1.1"/><path d="M1311.6,76 V100 H1331 V90 L1322,74 H1312 Z" fill="#ececec"/><g transform="rotate(40 1321.5 88)"><rect x="1314.5" y="85.8" width="14" height="4.6" fill="#f1f1f1" stroke="#b4b4b4" stroke-width="1"/><path d="M1316.5,88.1 H1326.5" stroke="#b4b4b4" stroke-width="1.2"/></g><g transform="rotate(40 1329 80)"><rect x="1322" y="76.5" width="14" height="7" fill="#ececec" stroke="#b4b4b4" stroke-width="1"/><rect x="1322" y="81.5" width="14" height="2" fill="#b4b4b4"/><rect x="1330.5" y="72.5" width="5.5" height="4.5" fill="#ececec" stroke="#b4b4b4" stroke-width="1"/></g><path d="M1319,128 L1321.65,130.6 L1324.3,128" fill="none" stroke="#aaa" stroke-width="1.1"/><path d="M1409,156 L1413.5,151.5 L1418,156" fill="none" stroke="#444" stroke-width="1.2"/></svg>
<div style="left:15.61px;top:108.00px;font-family:'Liberation Sans',sans-serif;font-size:12.6px;line-height:12.6px;font-weight:400;color:#333;white-space:pre;transform:scaleX(0.8910);transform-origin:0 0;">Paste</div>
<div style="left:15.80px;top:148.00px;font-family:'Liberation Sans',sans-serif;font-size:11px;line-height:11px;font-weight:400;color:#444444;white-space:pre;transform:scaleX(1.0540);transform-origin:0 0;">Clipboard</div>
<div style="left:108.60px;top:83.00px;font-family:'Liberation Sans',sans-serif;font-size:12.6px;line-height:12.6px;font-weight:400;color:#222;white-space:pre;transform:scaleX(0.9544);transform-origin:0 0;">Calibri</div>
<div style="left:231.60px;top:83.00px;font-family:'Liberation Sans',sans-serif;font-size:12.6px;line-height:12.6px;font-weight:400;color:#222;white-space:pre;transform:scaleX(0.7728);transform-origin:0 0;">11</div>
<div style="left:112.00px;top:113.00px;font-family:'Liberation Sans',sans-serif;font-size:13.5px;line-height:13.5px;font-weight:700;color:#333;white-space:pre;transform:scaleX(0.8200);transform-origin:0 0;">B</div>
<div style="left:154.80px;top:114.00px;font-family:'Liberation Sans',sans-serif;font-size:12.5px;line-height:12.5px;font-weight:400;color:#333;white-space:pre;transform:scaleX(0.9778);transform-origin:0 0;">U</div>
<div style="left:155px;top:125px;width:9px;height:1px;background:#333;"></div>
<div style="left:189.40px;top:148.00px;font-family:'Liberation Sans',sans-serif;font-size:11px;line-height:11px;font-weight:400;color:#444444;white-space:pre;transform:scaleX(1.0613);transform-origin:0 0;">Font</div>
<div style="left:481.80px;top:83.00px;font-family:'Liberation Sans',sans-serif;font-size:12.6px;line-height:12.6px;font-weight:400;color:#333;white-space:pre;transform:scaleX(0.8954);transform-origin:0 0;">Wrap Text</div>
<div style="left:480.84px;top:115.00px;font-family:'Liberation Sans',sans-serif;font-size:12.6px;line-height:12.6px;font-weight:400;color:#333;white-space:pre;transform:scaleX(0.9601);transform-origin:0 0;">Merge &amp; Center</div>
<div style="left:425.00px;top:148.00px;font-family:'Liberation Sans',sans-serif;font-size:11px;line-height:11px;font-weight:400;color:#444444;white-space:pre;transform:scaleX(1.0827);transform-origin:0 0;">Alignment</div>
<div style="left:608.80px;top:83.00px;font-family:'Liberation Sans',sans-serif;font-size:12.6px;line-height:12.6px;font-weight:400;color:#222;white-space:pre;transform:scaleX(0.8862);transform-origin:0 0;">General</div>
<div style="left:643.70px;top:148.00px;font-family:'Liberation Sans',sans-serif;font-size:11px;line-height:11px;font-weight:400;color:#444444;white-space:pre;transform:scaleX(1.0162);transform-origin:0 0;">Number</div>
<div style="left:761.30px;top:108.00px;font-family:'Liberation Sans',sans-serif;font-size:12.6px;line-height:12.6px;font-weight:400;color:#333;white-space:pre;transform:scaleX(0.9837);transform-origin:0 0;">Conditional</div>
<div style="left:756.93px;top:124.00px;font-family:'Liberation Sans',sans-serif;font-size:12.6px;line-height:12.6px;font-weight:400;color:#333;white-space:pre;transform:scaleX(0.9715);transform-origin:0 0;">Formatting</div>
<div style="left:831.67px;top:108.00px;font-family:'Liberation Sans',sans-serif;font-size:12.6px;line-height:12.6px;font-weight:400;color:#333;white-space:pre;transform:scaleX(0.9280);transform-origin:0 0;">Format as</div>
<div style="left:839.20px;top:124.00px;font-family:'Liberation Sans',sans-serif;font-size:12.6px;line-height:12.6px;font-weight:400;color:#333;white-space:pre;transform:scaleX(0.8903);transform-origin:0 0;">Table</div>
<div style="left:900.00px;top:108.00px;font-family:'Liberation Sans',sans-serif;font-size:12.6px;line-height:12.6px;font-weight:400;color:#333;white-space:pre;transform:scaleX(0.9475);transform-origin:0 0;">Cell</div>
<div style="left:889.20px;top:124.00px;font-family:'Liberation Sans',sans-serif;font-size:12.6px;line-height:12.6px;font-weight:400;color:#333;white-space:pre;transform:scaleX(0.8648);transform-origin:0 0;">Styles</div>
<div style="left:829.00px;top:148.00px;font-family:'Liberation Sans',sans-serif;font-size:11px;line-height:11px;font-weight:400;color:#444444;white-space:pre;transform:scaleX(0.9391);transform-origin:0 0;">Styles</div>
<div style="left:954.07px;top:108.00px;font-family:'Liberation Sans',sans-serif;font-size:12.6px;line-height:12.6px;font-weight:400;color:#333;white-space:pre;transform:scaleX(0.9259);transform-origin:0 0;">Insert</div>
<div style="left:994.58px;top:108.00px;font-family:'Liberation Sans',sans-serif;font-size:12.6px;line-height:12.6px;font-weight:400;color:#333;white-space:pre;transform:scaleX(0.9181);transform-origin:0 0;">Delete</div>
<div style="left:1034.55px;top:108.00px;font-family:'Liberation Sans',sans-serif;font-size:12.6px;line-height:12.6px;font-weight:400;color:#333;white-space:pre;transform:scaleX(0.9471);transform-origin:0 0;">Format</div>
<div style="left:1000.50px;top:148.00px;font-family:'Liberation Sans',sans-serif;font-size:11px;line-height:11px;font-weight:400;color:#444444;white-space:pre;transform:scaleX(0.9219);transform-origin:0 0;">Cells</div>
<div style="left:1134.20px;top:108.00px;font-family:'Liberation Sans',sans-serif;font-size:12.6px;line-height:12.6px;font-weight:400;color:#333;white-space:pre;transform:scaleX(0.9411);transform-origin:0 0;">Sort &amp;</div>
<div style="left:1131.76px;top:124.00px;font-family:'Liberation Sans',sans-serif;font-size:12.6px;line-height:12.6px;font-weight:400;color:#333;white-space:pre;transform:scaleX(0.9406);transform-origin:0 0;">Filter</div>
<div style="left:1176.52px;top:108.00px;font-family:'Liberation Sans',sans-serif;font-size:12.6px;line-height:12.6px;font-weight:400;color:#333;white-space:pre;transform:scaleX(0.9834);transform-origin:0 0;">Find &amp;</div>
<div style="left:1174.40px;top:124.00px;font-family:'Liberation Sans',sans-serif;font-size:12.6px;line-height:12.6px;font-weight:400;color:#333;white-space:pre;transform:scaleX(0.8675);transform-origin:0 0;">Select</div>
<div style="left:1136.20px;top:148.00px;font-family:'Liberation Sans',sans-serif;font-size:11px;line-height:11px;font-weight:400;color:#444444;white-space:pre;transform:scaleX(1.0801);transform-origin:0 0;">Editing</div>
<div style="left:1241.61px;top:108.00px;font-family:'Liberation Sans',sans-serif;font-size:12.6px;line-height:12.6px;font-weight:400;color:#333;white-space:pre;transform:scaleX(0.8912);transform-origin:0 0;">Ideas</div>
<div style="left:1241.50px;top:148.00px;font-family:'Liberation Sans',sans-serif;font-size:11px;line-height:11px;font-weight:400;color:#444444;white-space:pre;">Ideas</div>
<div style="left:1295.40px;top:108.00px;font-family:'Liberation Sans',sans-serif;font-size:12.6px;line-height:12.6px;font-weight:400;color:#a6a6a6;white-space:pre;transform:scaleX(0.9095);transform-origin:0 0;">Sensitivity</div>
<div style="left:1296.50px;top:148.00px;font-family:'Liberation Sans',sans-serif;font-size:11px;line-height:11px;font-weight:400;color:#444444;white-space:pre;transform:scaleX(1.0057);transform-origin:0 0;">Sensitivity</div>
<div style="left:0px;top:35px;width:1px;height:631px;background:#217346;"></div>
<div style="left:1427px;top:35px;width:1px;height:631px;background:#217346;"></div>
<div style="left:0px;top:665px;width:1428px;height:1px;background:#217346;"></div>
</body></html>
